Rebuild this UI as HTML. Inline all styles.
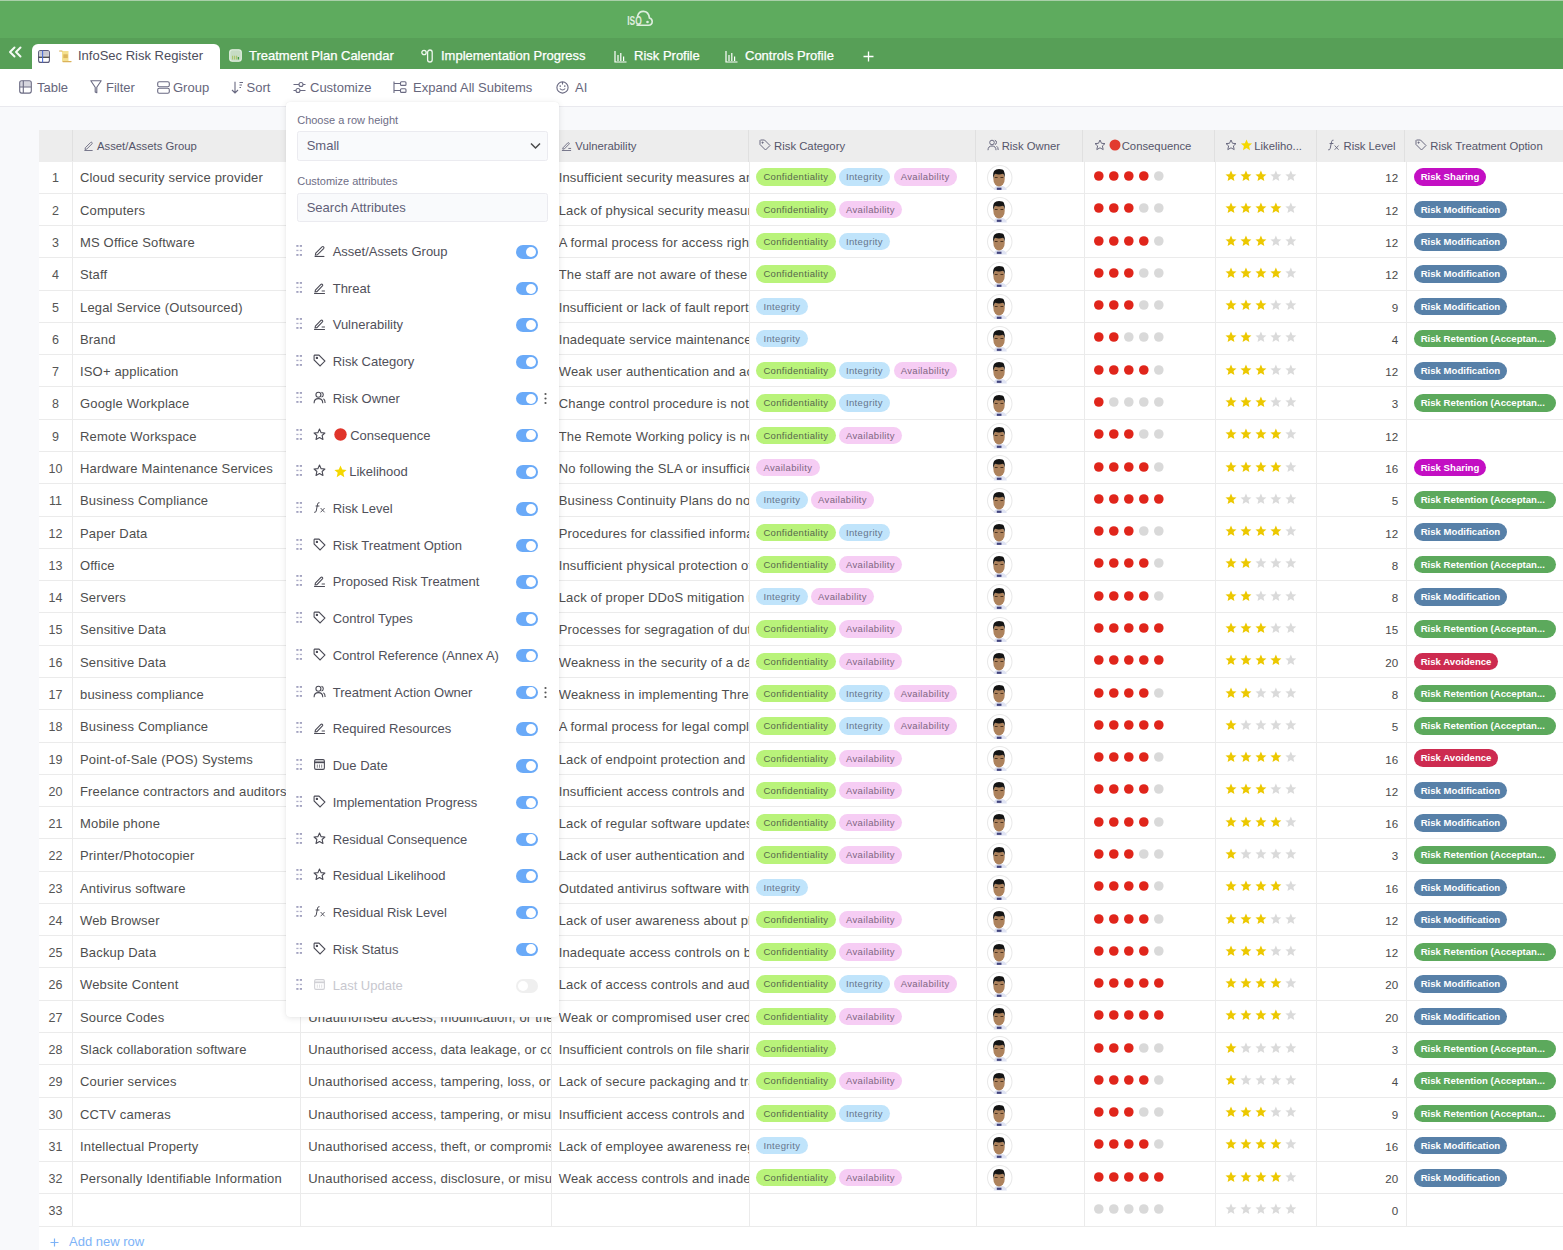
<!DOCTYPE html><html><head><meta charset="utf-8"><style>
*{box-sizing:border-box}
html,body{margin:0;padding:0}
body{width:1563px;height:1250px;overflow:hidden;background:#f8f9fb;font-family:"Liberation Sans",sans-serif;position:relative;color:#333}
.abs{position:absolute}
#top{position:absolute;left:0;top:0;width:1563px;height:38px;background:#5eab5e;border-top:1px solid #a9cfa9}
#tabs{position:absolute;left:0;top:38px;width:1563px;height:31px;background:#579f57}
.tab{position:absolute;top:1.5px;height:31px;line-height:31px;font-size:13px;color:#fff;white-space:nowrap;-webkit-text-stroke:0.25px #fff}
.tab svg{position:absolute;top:10px}
#atab{position:absolute;left:32px;top:5.5px;width:188px;height:25.5px;background:#fff;border-radius:6px 6px 0 0}
#tool{position:absolute;left:0;top:69px;width:1563px;height:38px;background:#fff;border-bottom:1px solid #e9e9ee}
.ti{position:absolute;top:1.2px;height:37px;line-height:36px;font-size:13px;color:#66667c;white-space:nowrap}
.ti svg{position:absolute;top:10.5px}
#table{position:absolute;left:39px;top:129.6px;width:1524px;height:1120.4px;background:#fff}
#thead{position:absolute;left:0;top:0;width:1524px;height:32px;background:#ededed}
.hc{position:absolute;top:0;height:32px;border-right:1px solid #e0e0e0;font-size:11.3px;color:#55556a;line-height:33.5px;white-space:nowrap;overflow:hidden;padding-left:11.3px}
.hi{display:inline-block;vertical-align:middle;margin-right:3px;position:relative;top:-1.5px;color:#6a6a80}
.hi svg{display:block}
.ht{vertical-align:middle}
.row{position:absolute;left:0;width:1524px;height:32.28px;border-bottom:1px solid #ebebeb}
.c{position:absolute;top:0;height:32.28px;border-right:1px solid #ebebeb;font-size:13px;letter-spacing:0.17px;line-height:33px;white-space:nowrap;overflow:hidden;color:#4e4e4e;padding-left:8px}
.pc{padding-left:7px}
.num{text-align:center;padding-left:0;color:#555;font-size:12.5px;letter-spacing:0;line-height:34.5px}
.rl{text-align:right;padding-right:8px;padding-left:0;color:#4a4a4a;font-size:11.6px;letter-spacing:0;line-height:33px}
.pill{display:inline-block;height:17.3px;line-height:17.5px;border-radius:9px;font-size:9.5px;letter-spacing:0.35px;padding:0 7.4px 0 7px;vertical-align:top;margin-right:3.3px;position:relative;top:7px}
.cc{background:#b9f37a;color:#57674c}
.ci{background:#c0e4fb;color:#66758c}
.ca{background:#f6cdf4;color:#7f6682}
.tp{display:inline-block;height:17.6px;line-height:17.8px;border-radius:9px;font-size:9.6px;letter-spacing:0;font-weight:bold;padding:0 6.5px;color:#fff;vertical-align:top;position:relative;top:6.9px}
.ts{background:#c30fc3}
.tm{background:#5780a8}
.tr{background:#5ca95c;padding-right:11px !important}
.tv{background:#cd2b50}
.av{position:absolute;left:11.3px;top:3.3px}
.dots{position:absolute;left:10.5px;top:9.6px}
.stars{position:absolute;left:9.5px;top:8.6px}
#pop{position:absolute;left:285.7px;top:101.5px;width:273px;height:915.5px;background:#fff;border-radius:4px;box-shadow:0 1px 6px rgba(0,0,0,0.10),0 0 1px rgba(0,0,0,0.08)}
.plab{position:absolute;left:11.5px;font-size:11px;color:#6e6e86;white-space:nowrap}
.pbox{position:absolute;left:11.5px;width:250.5px;background:#f9fafc;border:1px solid #ebebf0;border-radius:2.5px;font-size:13px;color:#5f5f78;padding-left:8.5px}
.attr{position:absolute;left:0;width:273px;height:20px;font-size:13px;color:#50505a;white-space:nowrap}
.attr .drag{position:absolute;left:10.8px;top:3px}
.attr .ai{position:absolute;left:27px;top:2px;color:#4a4a55}
.attr .ai svg{width:13px;height:13px;display:block}
.attr .at{position:absolute;left:47px;top:0;line-height:20px}
.tog{position:absolute;left:230px;top:3px;width:22px;height:13.5px;border-radius:7px;background:#6aaaf8}
.tog::after{content:"";position:absolute;right:2px;top:1.8px;width:10px;height:10px;border-radius:50%;background:#fff}
.tog.off{background:#efefef}
.tog.off::after{left:2px;right:auto}
.keb{position:absolute;left:258px;top:3px;width:3px;height:14px}
</style></head><body>
<div id="top"><svg class="abs" style="left:626px;top:7px" width="28" height="19" viewBox="0 0 28 19" opacity="0.8"><path d="M11 17.2 H22.5 Q26.2 17.2 26.2 13.6 Q26.2 10.6 23.4 10 Q22.6 3.4 17.3 3.4 Q12.8 3.4 11.6 8" fill="none" stroke="#fff" stroke-width="1.6" stroke-linecap="round"/><text x="1.2" y="17.4" font-family="Liberation Sans" font-weight="bold" font-size="12.5" fill="#fff" textLength="14.5" lengthAdjust="spacingAndGlyphs">ISO</text><circle cx="21.5" cy="14" r="1.3" fill="#fff"/></svg></div>
<div id="tabs">
<svg class="abs" style="left:8px;top:7.5px" width="15" height="12" viewBox="0 0 15 12" fill="none" stroke="#f4fbf4" stroke-width="2" stroke-linecap="round" stroke-linejoin="round"><path d="M6.5 1.5 L2 6 L6.5 10.5 M12.5 1.5 L8 6 L12.5 10.5"/></svg>
<div id="atab"></div>
<div class="tab" style="left:38px;top:5px;height:26px;line-height:26px;color:#4d4d5c;-webkit-text-stroke:0"><svg style="left:0;top:6.5px" width="12" height="13" viewBox="0 0 12 13"><rect x="0.6" y="0.6" width="10.8" height="11.8" rx="2" fill="#fff" stroke="#5a5a7a" stroke-width="1.1"/><rect x="1.2" y="1.2" width="9.6" height="4.6" fill="#c8c8d0"/><path d="M0.6 7.2 H11.4" stroke="#333" stroke-width="1.3"/><path d="M4.6 0.6 V12.4" stroke="#4b6fd6" stroke-width="1.1"/></svg><svg style="left:21px;top:6.5px" width="13" height="13" viewBox="0 0 13 13"><path d="M1 1 H9.5 V11.5 H4 Q3 11.5 3 10.5 V2 Q3 1 1 1Z" fill="#f4e08f"/><rect x="4.3" y="4.3" width="4.5" height="3.8" fill="#dcb65c"/><path d="M4 11.6 H12" stroke="#dbb25a" stroke-width="1.3" stroke-linecap="round"/><path d="M0.6 1 H3" stroke="#d8ae55" stroke-width="1.2" stroke-linecap="round"/></svg><span style="position:absolute;left:40px">InfoSec Risk Register</span></div>
<div class="tab" style="left:0"><svg style="left:229px;top:9.5px" width="13" height="13" viewBox="0 0 13 13"><rect x="0.7" y="0.7" width="11.6" height="11.6" rx="2.5" fill="#c6dcc4" stroke="#e8f2e6" stroke-width="1.1"/><path d="M3.6 10.5 V6.8 M5.6 10.5 V6.8 M7.6 10.5 V6.8" stroke="#a9c46a" stroke-width="1.1"/><path d="M9.4 10.5 V8" stroke="#3f9a3f" stroke-width="1.3"/></svg><span style="position:absolute;left:249px">Treatment Plan Calendar</span></div>
<div class="tab" style="left:0"><svg style="left:421px;top:9.5px" width="13" height="14" viewBox="0 0 13 14" fill="none" stroke="#eef7ee" stroke-width="1.3"><circle cx="3" cy="3.5" r="2.2"/><rect x="6.6" y="1" width="4.6" height="12" rx="2.3"/></svg><span style="position:absolute;left:441px">Implementation Progress</span></div>
<div class="tab" style="left:0"><svg style="left:614px" width="13" height="13" viewBox="0 0 13 13" fill="none" stroke="#fff" stroke-width="1.2"><path d="M1 1 V12 H12.5"/><path d="M4 11 V5 M6.8 11 V3 M9.6 11 V6.5"/></svg><span style="position:absolute;left:634px">Risk Profile</span></div>
<div class="tab" style="left:0"><svg style="left:725px" width="13" height="13" viewBox="0 0 13 13" fill="none" stroke="#fff" stroke-width="1.2"><path d="M1 1 V12 H12.5"/><path d="M4 11 V5 M6.8 11 V3 M9.6 11 V6.5"/></svg><span style="position:absolute;left:745px">Controls Profile</span></div>
<svg class="abs" style="left:863px;top:13px" width="11" height="11" viewBox="0 0 11 11"><path d="M5.5 0.5 V10.5 M0.5 5.5 H10.5" stroke="#fff" stroke-width="1.3"/></svg>
</div>
<div id="tool">
<div class="ti" style="left:0"><svg style="left:19px;top:10px" width="13" height="14" viewBox="0 0 13 14" fill="none" stroke="#6a6a82" stroke-width="1.1"><rect x="1.2" y="1.2" width="10.6" height="5.6" fill="#d6d6de" stroke="none"/><rect x="0.7" y="0.7" width="11.6" height="12.4" rx="2"/><path d="M0.7 7 H12.3 M4.3 0.7 V13.1"/></svg><span style="position:absolute;left:37px">Table</span></div>
<div class="ti" style="left:0"><svg style="left:89.5px;top:10px" width="12" height="14" viewBox="0 0 12 14" fill="none" stroke="#6a6a82" stroke-width="1.1" stroke-linejoin="round"><path d="M0.8 0.8 H11.2 L6.8 7.2 V12.8 L5.2 12 V7.2Z"/></svg><span style="position:absolute;left:106px">Filter</span></div>
<div class="ti" style="left:0"><svg style="left:157px" width="13" height="13" viewBox="0 0 13 13" fill="none" stroke="#6a6a82" stroke-width="1.1"><rect x="0.7" y="0.7" width="11.6" height="5" rx="1.5"/><rect x="0.7" y="7.3" width="11.6" height="5" rx="1.5"/></svg><span style="position:absolute;left:173px">Group</span></div>
<div class="ti" style="left:0"><svg style="left:230.5px" width="13" height="13" viewBox="0 0 13 13" fill="none" stroke="#6a6a82" stroke-width="1.1"><path d="M4 0.8 V12 M1 9 L4 12 L7 9 M8.5 1.5 H12 M8.5 4 H11 M8.5 6.5 H10"/></svg><span style="position:absolute;left:246.6px">Sort</span></div>
<div class="ti" style="left:0"><svg style="left:293px" width="13" height="13" viewBox="0 0 13 13" fill="none" stroke="#6a6a82" stroke-width="1.1"><path d="M0.5 3.5 H12.5 M0.5 9.5 H12.5"/><circle cx="8" cy="3.5" r="2" fill="#fff"/><circle cx="5" cy="9.5" r="2" fill="#fff"/></svg><span style="position:absolute;left:310px">Customize</span></div>
<div class="ti" style="left:0"><svg style="left:393px" width="14" height="13" viewBox="0 0 14 13" fill="none" stroke="#6a6a82" stroke-width="1.1"><path d="M1 0.5 V12 M1 2.5 H7 M1 9.5 H7"/><rect x="7.5" y="0.8" width="5.5" height="3.6" rx="1"/><rect x="7.5" y="7.8" width="5.5" height="3.6" rx="1"/></svg><span style="position:absolute;left:413px">Expand All Subitems</span></div>
<div class="ti" style="left:0"><svg style="left:556px" width="13" height="13" viewBox="0 0 13 13" fill="none" stroke="#6a6a82" stroke-width="1.1"><circle cx="6.5" cy="6.5" r="5.6"/><path d="M3.8 7.5 Q6.5 10.5 9.2 7.5 M4.2 4.2 V6 M8.8 4.2 V6 M6.5 1 V3.5"/></svg><span style="position:absolute;left:575px">AI</span></div>
</div>
<div id="table"><div id="thead">
<div class="hc" style="left:0;width:33.70px"></div>
<div class="hc" style="left:32.70px;width:228.80px"><span class="hi"><svg width="11" height="11" viewBox="0 0 12 12" fill="none" stroke="currentColor" stroke-width="1"><path d="M2.5 8.5 L8.3 2.7 Q9.1 2 9.8 2.7 Q10.5 3.4 9.8 4.2 L4 10 L2.2 10.3Z"/><path d="M1.5 11.5 H10.5"/></svg></span><span class="ht">Asset/Assets Group</span></div>
<div class="hc" style="left:260.50px;width:251.50px"><span class="hi"><svg width="11" height="11" viewBox="0 0 12 12" fill="none" stroke="currentColor" stroke-width="1"><path d="M2.2 8.5 L7.3 3.2 Q8 2.5 8.7 3.2 Q9.4 3.9 8.7 4.6 L3.6 9.8 L1.9 10Z"/><path d="M1 11.5 H11 M8 9.2 H11"/></svg></span><span class="ht">Threat</span></div>
<div class="hc" style="left:511.00px;width:198.80px"><span class="hi"><svg width="11" height="11" viewBox="0 0 12 12" fill="none" stroke="currentColor" stroke-width="1"><path d="M2.2 8.5 L7.3 3.2 Q8 2.5 8.7 3.2 Q9.4 3.9 8.7 4.6 L3.6 9.8 L1.9 10Z"/><path d="M1 11.5 H11 M8 9.2 H11"/></svg></span><span class="ht">Vulnerability</span></div>
<div class="hc" style="left:708.80px;width:228.60px"><span class="hi"><svg width="12" height="12" viewBox="0 0 12 12" fill="none" stroke="currentColor" stroke-width="1"><path d="M1 1.5 V5.5 L6.5 11 L11 6.5 L5.5 1 H1.5Z"/><circle cx="3.6" cy="3.6" r="0.6" fill="currentColor"/></svg></span><span class="ht">Risk Category</span></div>
<div class="hc" style="left:936.40px;width:108.00px"><span class="hi"><svg width="12" height="12" viewBox="0 0 12 12" fill="none" stroke="currentColor" stroke-width="1"><circle cx="5" cy="3.5" r="2.3"/><path d="M1 11.2 Q1 7 5 7 Q9 7 9 11.2"/><path d="M7.8 1.3 Q9.6 1.6 9.5 3.5 Q9.4 5.3 7.8 5.6 M9.6 7.2 Q11.2 8 11.2 11"/></svg></span><span class="ht">Risk Owner</span></div>
<div class="hc" style="left:1043.40px;width:132.50px"><span class="hi"><svg width="12" height="12" viewBox="0 0 12 12" fill="none" stroke="currentColor" stroke-width="1"><path d="M6 1 L7.5 4.3 L11 4.6 L8.4 6.9 L9.2 10.6 L6 8.8 L2.8 10.6 L3.6 6.9 L1 4.6 L4.5 4.3Z" stroke-linejoin="round"/></svg></span><span class="hi" style="margin-right:1px"><svg width="12" height="12" viewBox="0 0 12 12"><circle cx="6" cy="6" r="5.5" fill="#e23a2e"/></svg></span><span class="ht">Consequence</span></div>
<div class="hc" style="left:1174.90px;width:103.30px"><span class="hi"><svg width="12" height="12" viewBox="0 0 12 12" fill="none" stroke="currentColor" stroke-width="1"><path d="M6 1 L7.5 4.3 L11 4.6 L8.4 6.9 L9.2 10.6 L6 8.8 L2.8 10.6 L3.6 6.9 L1 4.6 L4.5 4.3Z" stroke-linejoin="round"/></svg></span><span class="hi" style="margin-right:1px"><svg width="13" height="12" viewBox="0 0 12 12"><path d="M6 0.5 L7.6 4.2 L11.6 4.5 L8.6 7.1 L9.5 11.2 L6 9.1 L2.5 11.2 L3.4 7.1 L0.4 4.5 L4.4 4.2Z" fill="#f5d800"/></svg></span><span class="ht">Likeliho...</span></div>
<div class="hc" style="left:1277.20px;width:88.80px"><span class="hi"><svg width="13" height="12" viewBox="0 0 13 12" fill="none" stroke="currentColor" stroke-width="1"><path d="M6.5 1.2 Q5 0.8 4.6 2.6 L3.2 9.5 Q2.8 11.2 1.2 10.8 M2.6 4.5 H6.4"/><path d="M7.6 6.5 L11.6 10.8 M11.6 6.5 L7.6 10.8" stroke-width="0.9"/></svg></span><span class="ht">Risk Level</span></div>
<div class="hc" style="left:1365.00px;width:160.00px"><span class="hi"><svg width="12" height="12" viewBox="0 0 12 12" fill="none" stroke="currentColor" stroke-width="1"><path d="M1 1.5 V5.5 L6.5 11 L11 6.5 L5.5 1 H1.5Z"/><circle cx="3.6" cy="3.6" r="0.6" fill="currentColor"/></svg></span><span class="ht">Risk Treatment Option</span></div>
</div>
<div class="row" style="top:31.90px">
<div class="c num" style="left:0.00px;width:34.00px">1</div>
<div class="c " style="left:33.00px;width:229.30px">Cloud security service provider</div>
<div class="c " style="left:261.30px;width:251.40px"></div>
<div class="c " style="left:511.70px;width:199.70px">Insufficient security measures and</div>
<div class="c pc" style="left:710.40px;width:227.70px"><span class="pill cc">Confidentiality</span><span class="pill ci">Integrity</span><span class="pill ca">Availability</span></div>
<div class="c " style="left:937.10px;width:108.50px"><svg class="av" width="25.5" height="25.5" viewBox="0 0 25 25"><circle cx="12.5" cy="12.5" r="12" fill="#fff" stroke="#e9e9e9" stroke-width="1"/><path d="M6.5 25 Q7 21.2 10 20.6 L15 20.6 Q18.6 21.2 19.5 25Z" fill="#dfe3f3"/><path d="M9.6 22.2 H14.2 V24.4 H9.6Z" fill="#41447e"/><ellipse cx="11.8" cy="13.6" rx="5.6" ry="7.6" fill="#ad825c"/><path d="M6.1 13 Q5.6 7.5 7.2 5.6 Q8.5 3.9 11.8 3.9 Q15.6 3.9 16.6 5.8 Q17.8 8 17.4 12.6 Q16.8 9.2 15.6 8.6 Q12 9.8 8 8.7 Q6.8 10 6.1 13Z" fill="#141414"/><path d="M7.6 12.2 H10.4 M13.2 12.2 H16" stroke="#4d3522" stroke-width="1.1"/></svg></div>
<div class="c " style="left:1044.60px;width:132.80px"><svg class="dots" width="72" height="10" viewBox="0 0 72 10"><circle cx="4.8" cy="5" r="4.8" fill="#e0251b"/><circle cx="19.8" cy="5" r="4.8" fill="#e0251b"/><circle cx="34.8" cy="5" r="4.8" fill="#e0251b"/><circle cx="49.8" cy="5" r="4.8" fill="#e0251b"/><circle cx="64.8" cy="5" r="4.8" fill="#d9d9d9"/></svg></div>
<div class="c " style="left:1176.40px;width:101.80px"><svg class="stars" width="72" height="12" viewBox="0 0 72 12"><path transform="translate(0.00,0)" d="M6 0.6 L7.6 4.2 L11.5 4.5 L8.5 7.1 L9.4 10.9 L6 8.9 L2.6 10.9 L3.5 7.1 L0.5 4.5 L4.4 4.2Z" fill="#ecc800"/><path transform="translate(14.96,0)" d="M6 0.6 L7.6 4.2 L11.5 4.5 L8.5 7.1 L9.4 10.9 L6 8.9 L2.6 10.9 L3.5 7.1 L0.5 4.5 L4.4 4.2Z" fill="#ecc800"/><path transform="translate(29.92,0)" d="M6 0.6 L7.6 4.2 L11.5 4.5 L8.5 7.1 L9.4 10.9 L6 8.9 L2.6 10.9 L3.5 7.1 L0.5 4.5 L4.4 4.2Z" fill="#ecc800"/><path transform="translate(44.88,0)" d="M6 0.6 L7.6 4.2 L11.5 4.5 L8.5 7.1 L9.4 10.9 L6 8.9 L2.6 10.9 L3.5 7.1 L0.5 4.5 L4.4 4.2Z" fill="#dadada"/><path transform="translate(59.84,0)" d="M6 0.6 L7.6 4.2 L11.5 4.5 L8.5 7.1 L9.4 10.9 L6 8.9 L2.6 10.9 L3.5 7.1 L0.5 4.5 L4.4 4.2Z" fill="#dadada"/></svg></div>
<div class="c rl" style="left:1277.20px;width:91.00px">12</div>
<div class="c " style="left:1367.20px;width:157.80px"><span class="tp ts">Risk Sharing</span></div>
</div>
<div class="row" style="top:64.18px">
<div class="c num" style="left:0.00px;width:34.00px">2</div>
<div class="c " style="left:33.00px;width:229.30px">Computers</div>
<div class="c " style="left:261.30px;width:251.40px"></div>
<div class="c " style="left:511.70px;width:199.70px">Lack of physical security measures</div>
<div class="c pc" style="left:710.40px;width:227.70px"><span class="pill cc">Confidentiality</span><span class="pill ca">Availability</span></div>
<div class="c " style="left:937.10px;width:108.50px"><svg class="av" width="25.5" height="25.5" viewBox="0 0 25 25"><circle cx="12.5" cy="12.5" r="12" fill="#fff" stroke="#e9e9e9" stroke-width="1"/><path d="M6.5 25 Q7 21.2 10 20.6 L15 20.6 Q18.6 21.2 19.5 25Z" fill="#dfe3f3"/><path d="M9.6 22.2 H14.2 V24.4 H9.6Z" fill="#41447e"/><ellipse cx="11.8" cy="13.6" rx="5.6" ry="7.6" fill="#ad825c"/><path d="M6.1 13 Q5.6 7.5 7.2 5.6 Q8.5 3.9 11.8 3.9 Q15.6 3.9 16.6 5.8 Q17.8 8 17.4 12.6 Q16.8 9.2 15.6 8.6 Q12 9.8 8 8.7 Q6.8 10 6.1 13Z" fill="#141414"/><path d="M7.6 12.2 H10.4 M13.2 12.2 H16" stroke="#4d3522" stroke-width="1.1"/></svg></div>
<div class="c " style="left:1044.60px;width:132.80px"><svg class="dots" width="72" height="10" viewBox="0 0 72 10"><circle cx="4.8" cy="5" r="4.8" fill="#e0251b"/><circle cx="19.8" cy="5" r="4.8" fill="#e0251b"/><circle cx="34.8" cy="5" r="4.8" fill="#e0251b"/><circle cx="49.8" cy="5" r="4.8" fill="#d9d9d9"/><circle cx="64.8" cy="5" r="4.8" fill="#d9d9d9"/></svg></div>
<div class="c " style="left:1176.40px;width:101.80px"><svg class="stars" width="72" height="12" viewBox="0 0 72 12"><path transform="translate(0.00,0)" d="M6 0.6 L7.6 4.2 L11.5 4.5 L8.5 7.1 L9.4 10.9 L6 8.9 L2.6 10.9 L3.5 7.1 L0.5 4.5 L4.4 4.2Z" fill="#ecc800"/><path transform="translate(14.96,0)" d="M6 0.6 L7.6 4.2 L11.5 4.5 L8.5 7.1 L9.4 10.9 L6 8.9 L2.6 10.9 L3.5 7.1 L0.5 4.5 L4.4 4.2Z" fill="#ecc800"/><path transform="translate(29.92,0)" d="M6 0.6 L7.6 4.2 L11.5 4.5 L8.5 7.1 L9.4 10.9 L6 8.9 L2.6 10.9 L3.5 7.1 L0.5 4.5 L4.4 4.2Z" fill="#ecc800"/><path transform="translate(44.88,0)" d="M6 0.6 L7.6 4.2 L11.5 4.5 L8.5 7.1 L9.4 10.9 L6 8.9 L2.6 10.9 L3.5 7.1 L0.5 4.5 L4.4 4.2Z" fill="#ecc800"/><path transform="translate(59.84,0)" d="M6 0.6 L7.6 4.2 L11.5 4.5 L8.5 7.1 L9.4 10.9 L6 8.9 L2.6 10.9 L3.5 7.1 L0.5 4.5 L4.4 4.2Z" fill="#dadada"/></svg></div>
<div class="c rl" style="left:1277.20px;width:91.00px">12</div>
<div class="c " style="left:1367.20px;width:157.80px"><span class="tp tm">Risk Modification</span></div>
</div>
<div class="row" style="top:96.46px">
<div class="c num" style="left:0.00px;width:34.00px">3</div>
<div class="c " style="left:33.00px;width:229.30px">MS Office Software</div>
<div class="c " style="left:261.30px;width:251.40px"></div>
<div class="c " style="left:511.70px;width:199.70px">A formal process for access rights</div>
<div class="c pc" style="left:710.40px;width:227.70px"><span class="pill cc">Confidentiality</span><span class="pill ci">Integrity</span></div>
<div class="c " style="left:937.10px;width:108.50px"><svg class="av" width="25.5" height="25.5" viewBox="0 0 25 25"><circle cx="12.5" cy="12.5" r="12" fill="#fff" stroke="#e9e9e9" stroke-width="1"/><path d="M6.5 25 Q7 21.2 10 20.6 L15 20.6 Q18.6 21.2 19.5 25Z" fill="#dfe3f3"/><path d="M9.6 22.2 H14.2 V24.4 H9.6Z" fill="#41447e"/><ellipse cx="11.8" cy="13.6" rx="5.6" ry="7.6" fill="#ad825c"/><path d="M6.1 13 Q5.6 7.5 7.2 5.6 Q8.5 3.9 11.8 3.9 Q15.6 3.9 16.6 5.8 Q17.8 8 17.4 12.6 Q16.8 9.2 15.6 8.6 Q12 9.8 8 8.7 Q6.8 10 6.1 13Z" fill="#141414"/><path d="M7.6 12.2 H10.4 M13.2 12.2 H16" stroke="#4d3522" stroke-width="1.1"/></svg></div>
<div class="c " style="left:1044.60px;width:132.80px"><svg class="dots" width="72" height="10" viewBox="0 0 72 10"><circle cx="4.8" cy="5" r="4.8" fill="#e0251b"/><circle cx="19.8" cy="5" r="4.8" fill="#e0251b"/><circle cx="34.8" cy="5" r="4.8" fill="#e0251b"/><circle cx="49.8" cy="5" r="4.8" fill="#e0251b"/><circle cx="64.8" cy="5" r="4.8" fill="#d9d9d9"/></svg></div>
<div class="c " style="left:1176.40px;width:101.80px"><svg class="stars" width="72" height="12" viewBox="0 0 72 12"><path transform="translate(0.00,0)" d="M6 0.6 L7.6 4.2 L11.5 4.5 L8.5 7.1 L9.4 10.9 L6 8.9 L2.6 10.9 L3.5 7.1 L0.5 4.5 L4.4 4.2Z" fill="#ecc800"/><path transform="translate(14.96,0)" d="M6 0.6 L7.6 4.2 L11.5 4.5 L8.5 7.1 L9.4 10.9 L6 8.9 L2.6 10.9 L3.5 7.1 L0.5 4.5 L4.4 4.2Z" fill="#ecc800"/><path transform="translate(29.92,0)" d="M6 0.6 L7.6 4.2 L11.5 4.5 L8.5 7.1 L9.4 10.9 L6 8.9 L2.6 10.9 L3.5 7.1 L0.5 4.5 L4.4 4.2Z" fill="#ecc800"/><path transform="translate(44.88,0)" d="M6 0.6 L7.6 4.2 L11.5 4.5 L8.5 7.1 L9.4 10.9 L6 8.9 L2.6 10.9 L3.5 7.1 L0.5 4.5 L4.4 4.2Z" fill="#dadada"/><path transform="translate(59.84,0)" d="M6 0.6 L7.6 4.2 L11.5 4.5 L8.5 7.1 L9.4 10.9 L6 8.9 L2.6 10.9 L3.5 7.1 L0.5 4.5 L4.4 4.2Z" fill="#dadada"/></svg></div>
<div class="c rl" style="left:1277.20px;width:91.00px">12</div>
<div class="c " style="left:1367.20px;width:157.80px"><span class="tp tm">Risk Modification</span></div>
</div>
<div class="row" style="top:128.74px">
<div class="c num" style="left:0.00px;width:34.00px">4</div>
<div class="c " style="left:33.00px;width:229.30px">Staff</div>
<div class="c " style="left:261.30px;width:251.40px"></div>
<div class="c " style="left:511.70px;width:199.70px">The staff are not aware of these</div>
<div class="c pc" style="left:710.40px;width:227.70px"><span class="pill cc">Confidentiality</span></div>
<div class="c " style="left:937.10px;width:108.50px"><svg class="av" width="25.5" height="25.5" viewBox="0 0 25 25"><circle cx="12.5" cy="12.5" r="12" fill="#fff" stroke="#e9e9e9" stroke-width="1"/><path d="M6.5 25 Q7 21.2 10 20.6 L15 20.6 Q18.6 21.2 19.5 25Z" fill="#dfe3f3"/><path d="M9.6 22.2 H14.2 V24.4 H9.6Z" fill="#41447e"/><ellipse cx="11.8" cy="13.6" rx="5.6" ry="7.6" fill="#ad825c"/><path d="M6.1 13 Q5.6 7.5 7.2 5.6 Q8.5 3.9 11.8 3.9 Q15.6 3.9 16.6 5.8 Q17.8 8 17.4 12.6 Q16.8 9.2 15.6 8.6 Q12 9.8 8 8.7 Q6.8 10 6.1 13Z" fill="#141414"/><path d="M7.6 12.2 H10.4 M13.2 12.2 H16" stroke="#4d3522" stroke-width="1.1"/></svg></div>
<div class="c " style="left:1044.60px;width:132.80px"><svg class="dots" width="72" height="10" viewBox="0 0 72 10"><circle cx="4.8" cy="5" r="4.8" fill="#e0251b"/><circle cx="19.8" cy="5" r="4.8" fill="#e0251b"/><circle cx="34.8" cy="5" r="4.8" fill="#e0251b"/><circle cx="49.8" cy="5" r="4.8" fill="#d9d9d9"/><circle cx="64.8" cy="5" r="4.8" fill="#d9d9d9"/></svg></div>
<div class="c " style="left:1176.40px;width:101.80px"><svg class="stars" width="72" height="12" viewBox="0 0 72 12"><path transform="translate(0.00,0)" d="M6 0.6 L7.6 4.2 L11.5 4.5 L8.5 7.1 L9.4 10.9 L6 8.9 L2.6 10.9 L3.5 7.1 L0.5 4.5 L4.4 4.2Z" fill="#ecc800"/><path transform="translate(14.96,0)" d="M6 0.6 L7.6 4.2 L11.5 4.5 L8.5 7.1 L9.4 10.9 L6 8.9 L2.6 10.9 L3.5 7.1 L0.5 4.5 L4.4 4.2Z" fill="#ecc800"/><path transform="translate(29.92,0)" d="M6 0.6 L7.6 4.2 L11.5 4.5 L8.5 7.1 L9.4 10.9 L6 8.9 L2.6 10.9 L3.5 7.1 L0.5 4.5 L4.4 4.2Z" fill="#ecc800"/><path transform="translate(44.88,0)" d="M6 0.6 L7.6 4.2 L11.5 4.5 L8.5 7.1 L9.4 10.9 L6 8.9 L2.6 10.9 L3.5 7.1 L0.5 4.5 L4.4 4.2Z" fill="#ecc800"/><path transform="translate(59.84,0)" d="M6 0.6 L7.6 4.2 L11.5 4.5 L8.5 7.1 L9.4 10.9 L6 8.9 L2.6 10.9 L3.5 7.1 L0.5 4.5 L4.4 4.2Z" fill="#dadada"/></svg></div>
<div class="c rl" style="left:1277.20px;width:91.00px">12</div>
<div class="c " style="left:1367.20px;width:157.80px"><span class="tp tm">Risk Modification</span></div>
</div>
<div class="row" style="top:161.02px">
<div class="c num" style="left:0.00px;width:34.00px">5</div>
<div class="c " style="left:33.00px;width:229.30px">Legal Service (Outsourced)</div>
<div class="c " style="left:261.30px;width:251.40px"></div>
<div class="c " style="left:511.70px;width:199.70px">Insufficient or lack of fault reporting</div>
<div class="c pc" style="left:710.40px;width:227.70px"><span class="pill ci">Integrity</span></div>
<div class="c " style="left:937.10px;width:108.50px"><svg class="av" width="25.5" height="25.5" viewBox="0 0 25 25"><circle cx="12.5" cy="12.5" r="12" fill="#fff" stroke="#e9e9e9" stroke-width="1"/><path d="M6.5 25 Q7 21.2 10 20.6 L15 20.6 Q18.6 21.2 19.5 25Z" fill="#dfe3f3"/><path d="M9.6 22.2 H14.2 V24.4 H9.6Z" fill="#41447e"/><ellipse cx="11.8" cy="13.6" rx="5.6" ry="7.6" fill="#ad825c"/><path d="M6.1 13 Q5.6 7.5 7.2 5.6 Q8.5 3.9 11.8 3.9 Q15.6 3.9 16.6 5.8 Q17.8 8 17.4 12.6 Q16.8 9.2 15.6 8.6 Q12 9.8 8 8.7 Q6.8 10 6.1 13Z" fill="#141414"/><path d="M7.6 12.2 H10.4 M13.2 12.2 H16" stroke="#4d3522" stroke-width="1.1"/></svg></div>
<div class="c " style="left:1044.60px;width:132.80px"><svg class="dots" width="72" height="10" viewBox="0 0 72 10"><circle cx="4.8" cy="5" r="4.8" fill="#e0251b"/><circle cx="19.8" cy="5" r="4.8" fill="#e0251b"/><circle cx="34.8" cy="5" r="4.8" fill="#e0251b"/><circle cx="49.8" cy="5" r="4.8" fill="#d9d9d9"/><circle cx="64.8" cy="5" r="4.8" fill="#d9d9d9"/></svg></div>
<div class="c " style="left:1176.40px;width:101.80px"><svg class="stars" width="72" height="12" viewBox="0 0 72 12"><path transform="translate(0.00,0)" d="M6 0.6 L7.6 4.2 L11.5 4.5 L8.5 7.1 L9.4 10.9 L6 8.9 L2.6 10.9 L3.5 7.1 L0.5 4.5 L4.4 4.2Z" fill="#ecc800"/><path transform="translate(14.96,0)" d="M6 0.6 L7.6 4.2 L11.5 4.5 L8.5 7.1 L9.4 10.9 L6 8.9 L2.6 10.9 L3.5 7.1 L0.5 4.5 L4.4 4.2Z" fill="#ecc800"/><path transform="translate(29.92,0)" d="M6 0.6 L7.6 4.2 L11.5 4.5 L8.5 7.1 L9.4 10.9 L6 8.9 L2.6 10.9 L3.5 7.1 L0.5 4.5 L4.4 4.2Z" fill="#ecc800"/><path transform="translate(44.88,0)" d="M6 0.6 L7.6 4.2 L11.5 4.5 L8.5 7.1 L9.4 10.9 L6 8.9 L2.6 10.9 L3.5 7.1 L0.5 4.5 L4.4 4.2Z" fill="#dadada"/><path transform="translate(59.84,0)" d="M6 0.6 L7.6 4.2 L11.5 4.5 L8.5 7.1 L9.4 10.9 L6 8.9 L2.6 10.9 L3.5 7.1 L0.5 4.5 L4.4 4.2Z" fill="#dadada"/></svg></div>
<div class="c rl" style="left:1277.20px;width:91.00px">9</div>
<div class="c " style="left:1367.20px;width:157.80px"><span class="tp tm">Risk Modification</span></div>
</div>
<div class="row" style="top:193.30px">
<div class="c num" style="left:0.00px;width:34.00px">6</div>
<div class="c " style="left:33.00px;width:229.30px">Brand</div>
<div class="c " style="left:261.30px;width:251.40px"></div>
<div class="c " style="left:511.70px;width:199.70px">Inadequate service maintenance</div>
<div class="c pc" style="left:710.40px;width:227.70px"><span class="pill ci">Integrity</span></div>
<div class="c " style="left:937.10px;width:108.50px"><svg class="av" width="25.5" height="25.5" viewBox="0 0 25 25"><circle cx="12.5" cy="12.5" r="12" fill="#fff" stroke="#e9e9e9" stroke-width="1"/><path d="M6.5 25 Q7 21.2 10 20.6 L15 20.6 Q18.6 21.2 19.5 25Z" fill="#dfe3f3"/><path d="M9.6 22.2 H14.2 V24.4 H9.6Z" fill="#41447e"/><ellipse cx="11.8" cy="13.6" rx="5.6" ry="7.6" fill="#ad825c"/><path d="M6.1 13 Q5.6 7.5 7.2 5.6 Q8.5 3.9 11.8 3.9 Q15.6 3.9 16.6 5.8 Q17.8 8 17.4 12.6 Q16.8 9.2 15.6 8.6 Q12 9.8 8 8.7 Q6.8 10 6.1 13Z" fill="#141414"/><path d="M7.6 12.2 H10.4 M13.2 12.2 H16" stroke="#4d3522" stroke-width="1.1"/></svg></div>
<div class="c " style="left:1044.60px;width:132.80px"><svg class="dots" width="72" height="10" viewBox="0 0 72 10"><circle cx="4.8" cy="5" r="4.8" fill="#e0251b"/><circle cx="19.8" cy="5" r="4.8" fill="#e0251b"/><circle cx="34.8" cy="5" r="4.8" fill="#d9d9d9"/><circle cx="49.8" cy="5" r="4.8" fill="#d9d9d9"/><circle cx="64.8" cy="5" r="4.8" fill="#d9d9d9"/></svg></div>
<div class="c " style="left:1176.40px;width:101.80px"><svg class="stars" width="72" height="12" viewBox="0 0 72 12"><path transform="translate(0.00,0)" d="M6 0.6 L7.6 4.2 L11.5 4.5 L8.5 7.1 L9.4 10.9 L6 8.9 L2.6 10.9 L3.5 7.1 L0.5 4.5 L4.4 4.2Z" fill="#ecc800"/><path transform="translate(14.96,0)" d="M6 0.6 L7.6 4.2 L11.5 4.5 L8.5 7.1 L9.4 10.9 L6 8.9 L2.6 10.9 L3.5 7.1 L0.5 4.5 L4.4 4.2Z" fill="#ecc800"/><path transform="translate(29.92,0)" d="M6 0.6 L7.6 4.2 L11.5 4.5 L8.5 7.1 L9.4 10.9 L6 8.9 L2.6 10.9 L3.5 7.1 L0.5 4.5 L4.4 4.2Z" fill="#dadada"/><path transform="translate(44.88,0)" d="M6 0.6 L7.6 4.2 L11.5 4.5 L8.5 7.1 L9.4 10.9 L6 8.9 L2.6 10.9 L3.5 7.1 L0.5 4.5 L4.4 4.2Z" fill="#dadada"/><path transform="translate(59.84,0)" d="M6 0.6 L7.6 4.2 L11.5 4.5 L8.5 7.1 L9.4 10.9 L6 8.9 L2.6 10.9 L3.5 7.1 L0.5 4.5 L4.4 4.2Z" fill="#dadada"/></svg></div>
<div class="c rl" style="left:1277.20px;width:91.00px">4</div>
<div class="c " style="left:1367.20px;width:157.80px"><span class="tp tr">Risk Retention (Acceptan...</span></div>
</div>
<div class="row" style="top:225.58px">
<div class="c num" style="left:0.00px;width:34.00px">7</div>
<div class="c " style="left:33.00px;width:229.30px">ISO+ application</div>
<div class="c " style="left:261.30px;width:251.40px"></div>
<div class="c " style="left:511.70px;width:199.70px">Weak user authentication and access</div>
<div class="c pc" style="left:710.40px;width:227.70px"><span class="pill cc">Confidentiality</span><span class="pill ci">Integrity</span><span class="pill ca">Availability</span></div>
<div class="c " style="left:937.10px;width:108.50px"><svg class="av" width="25.5" height="25.5" viewBox="0 0 25 25"><circle cx="12.5" cy="12.5" r="12" fill="#fff" stroke="#e9e9e9" stroke-width="1"/><path d="M6.5 25 Q7 21.2 10 20.6 L15 20.6 Q18.6 21.2 19.5 25Z" fill="#dfe3f3"/><path d="M9.6 22.2 H14.2 V24.4 H9.6Z" fill="#41447e"/><ellipse cx="11.8" cy="13.6" rx="5.6" ry="7.6" fill="#ad825c"/><path d="M6.1 13 Q5.6 7.5 7.2 5.6 Q8.5 3.9 11.8 3.9 Q15.6 3.9 16.6 5.8 Q17.8 8 17.4 12.6 Q16.8 9.2 15.6 8.6 Q12 9.8 8 8.7 Q6.8 10 6.1 13Z" fill="#141414"/><path d="M7.6 12.2 H10.4 M13.2 12.2 H16" stroke="#4d3522" stroke-width="1.1"/></svg></div>
<div class="c " style="left:1044.60px;width:132.80px"><svg class="dots" width="72" height="10" viewBox="0 0 72 10"><circle cx="4.8" cy="5" r="4.8" fill="#e0251b"/><circle cx="19.8" cy="5" r="4.8" fill="#e0251b"/><circle cx="34.8" cy="5" r="4.8" fill="#e0251b"/><circle cx="49.8" cy="5" r="4.8" fill="#e0251b"/><circle cx="64.8" cy="5" r="4.8" fill="#d9d9d9"/></svg></div>
<div class="c " style="left:1176.40px;width:101.80px"><svg class="stars" width="72" height="12" viewBox="0 0 72 12"><path transform="translate(0.00,0)" d="M6 0.6 L7.6 4.2 L11.5 4.5 L8.5 7.1 L9.4 10.9 L6 8.9 L2.6 10.9 L3.5 7.1 L0.5 4.5 L4.4 4.2Z" fill="#ecc800"/><path transform="translate(14.96,0)" d="M6 0.6 L7.6 4.2 L11.5 4.5 L8.5 7.1 L9.4 10.9 L6 8.9 L2.6 10.9 L3.5 7.1 L0.5 4.5 L4.4 4.2Z" fill="#ecc800"/><path transform="translate(29.92,0)" d="M6 0.6 L7.6 4.2 L11.5 4.5 L8.5 7.1 L9.4 10.9 L6 8.9 L2.6 10.9 L3.5 7.1 L0.5 4.5 L4.4 4.2Z" fill="#ecc800"/><path transform="translate(44.88,0)" d="M6 0.6 L7.6 4.2 L11.5 4.5 L8.5 7.1 L9.4 10.9 L6 8.9 L2.6 10.9 L3.5 7.1 L0.5 4.5 L4.4 4.2Z" fill="#dadada"/><path transform="translate(59.84,0)" d="M6 0.6 L7.6 4.2 L11.5 4.5 L8.5 7.1 L9.4 10.9 L6 8.9 L2.6 10.9 L3.5 7.1 L0.5 4.5 L4.4 4.2Z" fill="#dadada"/></svg></div>
<div class="c rl" style="left:1277.20px;width:91.00px">12</div>
<div class="c " style="left:1367.20px;width:157.80px"><span class="tp tm">Risk Modification</span></div>
</div>
<div class="row" style="top:257.86px">
<div class="c num" style="left:0.00px;width:34.00px">8</div>
<div class="c " style="left:33.00px;width:229.30px">Google Workplace</div>
<div class="c " style="left:261.30px;width:251.40px"></div>
<div class="c " style="left:511.70px;width:199.70px">Change control procedure is not</div>
<div class="c pc" style="left:710.40px;width:227.70px"><span class="pill cc">Confidentiality</span><span class="pill ci">Integrity</span></div>
<div class="c " style="left:937.10px;width:108.50px"><svg class="av" width="25.5" height="25.5" viewBox="0 0 25 25"><circle cx="12.5" cy="12.5" r="12" fill="#fff" stroke="#e9e9e9" stroke-width="1"/><path d="M6.5 25 Q7 21.2 10 20.6 L15 20.6 Q18.6 21.2 19.5 25Z" fill="#dfe3f3"/><path d="M9.6 22.2 H14.2 V24.4 H9.6Z" fill="#41447e"/><ellipse cx="11.8" cy="13.6" rx="5.6" ry="7.6" fill="#ad825c"/><path d="M6.1 13 Q5.6 7.5 7.2 5.6 Q8.5 3.9 11.8 3.9 Q15.6 3.9 16.6 5.8 Q17.8 8 17.4 12.6 Q16.8 9.2 15.6 8.6 Q12 9.8 8 8.7 Q6.8 10 6.1 13Z" fill="#141414"/><path d="M7.6 12.2 H10.4 M13.2 12.2 H16" stroke="#4d3522" stroke-width="1.1"/></svg></div>
<div class="c " style="left:1044.60px;width:132.80px"><svg class="dots" width="72" height="10" viewBox="0 0 72 10"><circle cx="4.8" cy="5" r="4.8" fill="#e0251b"/><circle cx="19.8" cy="5" r="4.8" fill="#d9d9d9"/><circle cx="34.8" cy="5" r="4.8" fill="#d9d9d9"/><circle cx="49.8" cy="5" r="4.8" fill="#d9d9d9"/><circle cx="64.8" cy="5" r="4.8" fill="#d9d9d9"/></svg></div>
<div class="c " style="left:1176.40px;width:101.80px"><svg class="stars" width="72" height="12" viewBox="0 0 72 12"><path transform="translate(0.00,0)" d="M6 0.6 L7.6 4.2 L11.5 4.5 L8.5 7.1 L9.4 10.9 L6 8.9 L2.6 10.9 L3.5 7.1 L0.5 4.5 L4.4 4.2Z" fill="#ecc800"/><path transform="translate(14.96,0)" d="M6 0.6 L7.6 4.2 L11.5 4.5 L8.5 7.1 L9.4 10.9 L6 8.9 L2.6 10.9 L3.5 7.1 L0.5 4.5 L4.4 4.2Z" fill="#ecc800"/><path transform="translate(29.92,0)" d="M6 0.6 L7.6 4.2 L11.5 4.5 L8.5 7.1 L9.4 10.9 L6 8.9 L2.6 10.9 L3.5 7.1 L0.5 4.5 L4.4 4.2Z" fill="#ecc800"/><path transform="translate(44.88,0)" d="M6 0.6 L7.6 4.2 L11.5 4.5 L8.5 7.1 L9.4 10.9 L6 8.9 L2.6 10.9 L3.5 7.1 L0.5 4.5 L4.4 4.2Z" fill="#dadada"/><path transform="translate(59.84,0)" d="M6 0.6 L7.6 4.2 L11.5 4.5 L8.5 7.1 L9.4 10.9 L6 8.9 L2.6 10.9 L3.5 7.1 L0.5 4.5 L4.4 4.2Z" fill="#dadada"/></svg></div>
<div class="c rl" style="left:1277.20px;width:91.00px">3</div>
<div class="c " style="left:1367.20px;width:157.80px"><span class="tp tr">Risk Retention (Acceptan...</span></div>
</div>
<div class="row" style="top:290.14px">
<div class="c num" style="left:0.00px;width:34.00px">9</div>
<div class="c " style="left:33.00px;width:229.30px">Remote Workspace</div>
<div class="c " style="left:261.30px;width:251.40px"></div>
<div class="c " style="left:511.70px;width:199.70px">The Remote Working policy is not</div>
<div class="c pc" style="left:710.40px;width:227.70px"><span class="pill cc">Confidentiality</span><span class="pill ca">Availability</span></div>
<div class="c " style="left:937.10px;width:108.50px"><svg class="av" width="25.5" height="25.5" viewBox="0 0 25 25"><circle cx="12.5" cy="12.5" r="12" fill="#fff" stroke="#e9e9e9" stroke-width="1"/><path d="M6.5 25 Q7 21.2 10 20.6 L15 20.6 Q18.6 21.2 19.5 25Z" fill="#dfe3f3"/><path d="M9.6 22.2 H14.2 V24.4 H9.6Z" fill="#41447e"/><ellipse cx="11.8" cy="13.6" rx="5.6" ry="7.6" fill="#ad825c"/><path d="M6.1 13 Q5.6 7.5 7.2 5.6 Q8.5 3.9 11.8 3.9 Q15.6 3.9 16.6 5.8 Q17.8 8 17.4 12.6 Q16.8 9.2 15.6 8.6 Q12 9.8 8 8.7 Q6.8 10 6.1 13Z" fill="#141414"/><path d="M7.6 12.2 H10.4 M13.2 12.2 H16" stroke="#4d3522" stroke-width="1.1"/></svg></div>
<div class="c " style="left:1044.60px;width:132.80px"><svg class="dots" width="72" height="10" viewBox="0 0 72 10"><circle cx="4.8" cy="5" r="4.8" fill="#e0251b"/><circle cx="19.8" cy="5" r="4.8" fill="#e0251b"/><circle cx="34.8" cy="5" r="4.8" fill="#e0251b"/><circle cx="49.8" cy="5" r="4.8" fill="#d9d9d9"/><circle cx="64.8" cy="5" r="4.8" fill="#d9d9d9"/></svg></div>
<div class="c " style="left:1176.40px;width:101.80px"><svg class="stars" width="72" height="12" viewBox="0 0 72 12"><path transform="translate(0.00,0)" d="M6 0.6 L7.6 4.2 L11.5 4.5 L8.5 7.1 L9.4 10.9 L6 8.9 L2.6 10.9 L3.5 7.1 L0.5 4.5 L4.4 4.2Z" fill="#ecc800"/><path transform="translate(14.96,0)" d="M6 0.6 L7.6 4.2 L11.5 4.5 L8.5 7.1 L9.4 10.9 L6 8.9 L2.6 10.9 L3.5 7.1 L0.5 4.5 L4.4 4.2Z" fill="#ecc800"/><path transform="translate(29.92,0)" d="M6 0.6 L7.6 4.2 L11.5 4.5 L8.5 7.1 L9.4 10.9 L6 8.9 L2.6 10.9 L3.5 7.1 L0.5 4.5 L4.4 4.2Z" fill="#ecc800"/><path transform="translate(44.88,0)" d="M6 0.6 L7.6 4.2 L11.5 4.5 L8.5 7.1 L9.4 10.9 L6 8.9 L2.6 10.9 L3.5 7.1 L0.5 4.5 L4.4 4.2Z" fill="#ecc800"/><path transform="translate(59.84,0)" d="M6 0.6 L7.6 4.2 L11.5 4.5 L8.5 7.1 L9.4 10.9 L6 8.9 L2.6 10.9 L3.5 7.1 L0.5 4.5 L4.4 4.2Z" fill="#dadada"/></svg></div>
<div class="c rl" style="left:1277.20px;width:91.00px">12</div>
<div class="c " style="left:1367.20px;width:157.80px"></div>
</div>
<div class="row" style="top:322.42px">
<div class="c num" style="left:0.00px;width:34.00px">10</div>
<div class="c " style="left:33.00px;width:229.30px">Hardware Maintenance Services</div>
<div class="c " style="left:261.30px;width:251.40px"></div>
<div class="c " style="left:511.70px;width:199.70px">No following the SLA or insufficient</div>
<div class="c pc" style="left:710.40px;width:227.70px"><span class="pill ca">Availability</span></div>
<div class="c " style="left:937.10px;width:108.50px"><svg class="av" width="25.5" height="25.5" viewBox="0 0 25 25"><circle cx="12.5" cy="12.5" r="12" fill="#fff" stroke="#e9e9e9" stroke-width="1"/><path d="M6.5 25 Q7 21.2 10 20.6 L15 20.6 Q18.6 21.2 19.5 25Z" fill="#dfe3f3"/><path d="M9.6 22.2 H14.2 V24.4 H9.6Z" fill="#41447e"/><ellipse cx="11.8" cy="13.6" rx="5.6" ry="7.6" fill="#ad825c"/><path d="M6.1 13 Q5.6 7.5 7.2 5.6 Q8.5 3.9 11.8 3.9 Q15.6 3.9 16.6 5.8 Q17.8 8 17.4 12.6 Q16.8 9.2 15.6 8.6 Q12 9.8 8 8.7 Q6.8 10 6.1 13Z" fill="#141414"/><path d="M7.6 12.2 H10.4 M13.2 12.2 H16" stroke="#4d3522" stroke-width="1.1"/></svg></div>
<div class="c " style="left:1044.60px;width:132.80px"><svg class="dots" width="72" height="10" viewBox="0 0 72 10"><circle cx="4.8" cy="5" r="4.8" fill="#e0251b"/><circle cx="19.8" cy="5" r="4.8" fill="#e0251b"/><circle cx="34.8" cy="5" r="4.8" fill="#e0251b"/><circle cx="49.8" cy="5" r="4.8" fill="#e0251b"/><circle cx="64.8" cy="5" r="4.8" fill="#d9d9d9"/></svg></div>
<div class="c " style="left:1176.40px;width:101.80px"><svg class="stars" width="72" height="12" viewBox="0 0 72 12"><path transform="translate(0.00,0)" d="M6 0.6 L7.6 4.2 L11.5 4.5 L8.5 7.1 L9.4 10.9 L6 8.9 L2.6 10.9 L3.5 7.1 L0.5 4.5 L4.4 4.2Z" fill="#ecc800"/><path transform="translate(14.96,0)" d="M6 0.6 L7.6 4.2 L11.5 4.5 L8.5 7.1 L9.4 10.9 L6 8.9 L2.6 10.9 L3.5 7.1 L0.5 4.5 L4.4 4.2Z" fill="#ecc800"/><path transform="translate(29.92,0)" d="M6 0.6 L7.6 4.2 L11.5 4.5 L8.5 7.1 L9.4 10.9 L6 8.9 L2.6 10.9 L3.5 7.1 L0.5 4.5 L4.4 4.2Z" fill="#ecc800"/><path transform="translate(44.88,0)" d="M6 0.6 L7.6 4.2 L11.5 4.5 L8.5 7.1 L9.4 10.9 L6 8.9 L2.6 10.9 L3.5 7.1 L0.5 4.5 L4.4 4.2Z" fill="#ecc800"/><path transform="translate(59.84,0)" d="M6 0.6 L7.6 4.2 L11.5 4.5 L8.5 7.1 L9.4 10.9 L6 8.9 L2.6 10.9 L3.5 7.1 L0.5 4.5 L4.4 4.2Z" fill="#dadada"/></svg></div>
<div class="c rl" style="left:1277.20px;width:91.00px">16</div>
<div class="c " style="left:1367.20px;width:157.80px"><span class="tp ts">Risk Sharing</span></div>
</div>
<div class="row" style="top:354.70px">
<div class="c num" style="left:0.00px;width:34.00px">11</div>
<div class="c " style="left:33.00px;width:229.30px">Business Compliance</div>
<div class="c " style="left:261.30px;width:251.40px"></div>
<div class="c " style="left:511.70px;width:199.70px">Business Continuity Plans do not</div>
<div class="c pc" style="left:710.40px;width:227.70px"><span class="pill ci">Integrity</span><span class="pill ca">Availability</span></div>
<div class="c " style="left:937.10px;width:108.50px"><svg class="av" width="25.5" height="25.5" viewBox="0 0 25 25"><circle cx="12.5" cy="12.5" r="12" fill="#fff" stroke="#e9e9e9" stroke-width="1"/><path d="M6.5 25 Q7 21.2 10 20.6 L15 20.6 Q18.6 21.2 19.5 25Z" fill="#dfe3f3"/><path d="M9.6 22.2 H14.2 V24.4 H9.6Z" fill="#41447e"/><ellipse cx="11.8" cy="13.6" rx="5.6" ry="7.6" fill="#ad825c"/><path d="M6.1 13 Q5.6 7.5 7.2 5.6 Q8.5 3.9 11.8 3.9 Q15.6 3.9 16.6 5.8 Q17.8 8 17.4 12.6 Q16.8 9.2 15.6 8.6 Q12 9.8 8 8.7 Q6.8 10 6.1 13Z" fill="#141414"/><path d="M7.6 12.2 H10.4 M13.2 12.2 H16" stroke="#4d3522" stroke-width="1.1"/></svg></div>
<div class="c " style="left:1044.60px;width:132.80px"><svg class="dots" width="72" height="10" viewBox="0 0 72 10"><circle cx="4.8" cy="5" r="4.8" fill="#e0251b"/><circle cx="19.8" cy="5" r="4.8" fill="#e0251b"/><circle cx="34.8" cy="5" r="4.8" fill="#e0251b"/><circle cx="49.8" cy="5" r="4.8" fill="#e0251b"/><circle cx="64.8" cy="5" r="4.8" fill="#e0251b"/></svg></div>
<div class="c " style="left:1176.40px;width:101.80px"><svg class="stars" width="72" height="12" viewBox="0 0 72 12"><path transform="translate(0.00,0)" d="M6 0.6 L7.6 4.2 L11.5 4.5 L8.5 7.1 L9.4 10.9 L6 8.9 L2.6 10.9 L3.5 7.1 L0.5 4.5 L4.4 4.2Z" fill="#ecc800"/><path transform="translate(14.96,0)" d="M6 0.6 L7.6 4.2 L11.5 4.5 L8.5 7.1 L9.4 10.9 L6 8.9 L2.6 10.9 L3.5 7.1 L0.5 4.5 L4.4 4.2Z" fill="#dadada"/><path transform="translate(29.92,0)" d="M6 0.6 L7.6 4.2 L11.5 4.5 L8.5 7.1 L9.4 10.9 L6 8.9 L2.6 10.9 L3.5 7.1 L0.5 4.5 L4.4 4.2Z" fill="#dadada"/><path transform="translate(44.88,0)" d="M6 0.6 L7.6 4.2 L11.5 4.5 L8.5 7.1 L9.4 10.9 L6 8.9 L2.6 10.9 L3.5 7.1 L0.5 4.5 L4.4 4.2Z" fill="#dadada"/><path transform="translate(59.84,0)" d="M6 0.6 L7.6 4.2 L11.5 4.5 L8.5 7.1 L9.4 10.9 L6 8.9 L2.6 10.9 L3.5 7.1 L0.5 4.5 L4.4 4.2Z" fill="#dadada"/></svg></div>
<div class="c rl" style="left:1277.20px;width:91.00px">5</div>
<div class="c " style="left:1367.20px;width:157.80px"><span class="tp tr">Risk Retention (Acceptan...</span></div>
</div>
<div class="row" style="top:386.98px">
<div class="c num" style="left:0.00px;width:34.00px">12</div>
<div class="c " style="left:33.00px;width:229.30px">Paper Data</div>
<div class="c " style="left:261.30px;width:251.40px"></div>
<div class="c " style="left:511.70px;width:199.70px">Procedures for classified information</div>
<div class="c pc" style="left:710.40px;width:227.70px"><span class="pill cc">Confidentiality</span><span class="pill ci">Integrity</span></div>
<div class="c " style="left:937.10px;width:108.50px"><svg class="av" width="25.5" height="25.5" viewBox="0 0 25 25"><circle cx="12.5" cy="12.5" r="12" fill="#fff" stroke="#e9e9e9" stroke-width="1"/><path d="M6.5 25 Q7 21.2 10 20.6 L15 20.6 Q18.6 21.2 19.5 25Z" fill="#dfe3f3"/><path d="M9.6 22.2 H14.2 V24.4 H9.6Z" fill="#41447e"/><ellipse cx="11.8" cy="13.6" rx="5.6" ry="7.6" fill="#ad825c"/><path d="M6.1 13 Q5.6 7.5 7.2 5.6 Q8.5 3.9 11.8 3.9 Q15.6 3.9 16.6 5.8 Q17.8 8 17.4 12.6 Q16.8 9.2 15.6 8.6 Q12 9.8 8 8.7 Q6.8 10 6.1 13Z" fill="#141414"/><path d="M7.6 12.2 H10.4 M13.2 12.2 H16" stroke="#4d3522" stroke-width="1.1"/></svg></div>
<div class="c " style="left:1044.60px;width:132.80px"><svg class="dots" width="72" height="10" viewBox="0 0 72 10"><circle cx="4.8" cy="5" r="4.8" fill="#e0251b"/><circle cx="19.8" cy="5" r="4.8" fill="#e0251b"/><circle cx="34.8" cy="5" r="4.8" fill="#e0251b"/><circle cx="49.8" cy="5" r="4.8" fill="#d9d9d9"/><circle cx="64.8" cy="5" r="4.8" fill="#d9d9d9"/></svg></div>
<div class="c " style="left:1176.40px;width:101.80px"><svg class="stars" width="72" height="12" viewBox="0 0 72 12"><path transform="translate(0.00,0)" d="M6 0.6 L7.6 4.2 L11.5 4.5 L8.5 7.1 L9.4 10.9 L6 8.9 L2.6 10.9 L3.5 7.1 L0.5 4.5 L4.4 4.2Z" fill="#ecc800"/><path transform="translate(14.96,0)" d="M6 0.6 L7.6 4.2 L11.5 4.5 L8.5 7.1 L9.4 10.9 L6 8.9 L2.6 10.9 L3.5 7.1 L0.5 4.5 L4.4 4.2Z" fill="#ecc800"/><path transform="translate(29.92,0)" d="M6 0.6 L7.6 4.2 L11.5 4.5 L8.5 7.1 L9.4 10.9 L6 8.9 L2.6 10.9 L3.5 7.1 L0.5 4.5 L4.4 4.2Z" fill="#ecc800"/><path transform="translate(44.88,0)" d="M6 0.6 L7.6 4.2 L11.5 4.5 L8.5 7.1 L9.4 10.9 L6 8.9 L2.6 10.9 L3.5 7.1 L0.5 4.5 L4.4 4.2Z" fill="#ecc800"/><path transform="translate(59.84,0)" d="M6 0.6 L7.6 4.2 L11.5 4.5 L8.5 7.1 L9.4 10.9 L6 8.9 L2.6 10.9 L3.5 7.1 L0.5 4.5 L4.4 4.2Z" fill="#dadada"/></svg></div>
<div class="c rl" style="left:1277.20px;width:91.00px">12</div>
<div class="c " style="left:1367.20px;width:157.80px"><span class="tp tm">Risk Modification</span></div>
</div>
<div class="row" style="top:419.26px">
<div class="c num" style="left:0.00px;width:34.00px">13</div>
<div class="c " style="left:33.00px;width:229.30px">Office</div>
<div class="c " style="left:261.30px;width:251.40px"></div>
<div class="c " style="left:511.70px;width:199.70px">Insufficient physical protection of</div>
<div class="c pc" style="left:710.40px;width:227.70px"><span class="pill cc">Confidentiality</span><span class="pill ca">Availability</span></div>
<div class="c " style="left:937.10px;width:108.50px"><svg class="av" width="25.5" height="25.5" viewBox="0 0 25 25"><circle cx="12.5" cy="12.5" r="12" fill="#fff" stroke="#e9e9e9" stroke-width="1"/><path d="M6.5 25 Q7 21.2 10 20.6 L15 20.6 Q18.6 21.2 19.5 25Z" fill="#dfe3f3"/><path d="M9.6 22.2 H14.2 V24.4 H9.6Z" fill="#41447e"/><ellipse cx="11.8" cy="13.6" rx="5.6" ry="7.6" fill="#ad825c"/><path d="M6.1 13 Q5.6 7.5 7.2 5.6 Q8.5 3.9 11.8 3.9 Q15.6 3.9 16.6 5.8 Q17.8 8 17.4 12.6 Q16.8 9.2 15.6 8.6 Q12 9.8 8 8.7 Q6.8 10 6.1 13Z" fill="#141414"/><path d="M7.6 12.2 H10.4 M13.2 12.2 H16" stroke="#4d3522" stroke-width="1.1"/></svg></div>
<div class="c " style="left:1044.60px;width:132.80px"><svg class="dots" width="72" height="10" viewBox="0 0 72 10"><circle cx="4.8" cy="5" r="4.8" fill="#e0251b"/><circle cx="19.8" cy="5" r="4.8" fill="#e0251b"/><circle cx="34.8" cy="5" r="4.8" fill="#e0251b"/><circle cx="49.8" cy="5" r="4.8" fill="#e0251b"/><circle cx="64.8" cy="5" r="4.8" fill="#d9d9d9"/></svg></div>
<div class="c " style="left:1176.40px;width:101.80px"><svg class="stars" width="72" height="12" viewBox="0 0 72 12"><path transform="translate(0.00,0)" d="M6 0.6 L7.6 4.2 L11.5 4.5 L8.5 7.1 L9.4 10.9 L6 8.9 L2.6 10.9 L3.5 7.1 L0.5 4.5 L4.4 4.2Z" fill="#ecc800"/><path transform="translate(14.96,0)" d="M6 0.6 L7.6 4.2 L11.5 4.5 L8.5 7.1 L9.4 10.9 L6 8.9 L2.6 10.9 L3.5 7.1 L0.5 4.5 L4.4 4.2Z" fill="#ecc800"/><path transform="translate(29.92,0)" d="M6 0.6 L7.6 4.2 L11.5 4.5 L8.5 7.1 L9.4 10.9 L6 8.9 L2.6 10.9 L3.5 7.1 L0.5 4.5 L4.4 4.2Z" fill="#dadada"/><path transform="translate(44.88,0)" d="M6 0.6 L7.6 4.2 L11.5 4.5 L8.5 7.1 L9.4 10.9 L6 8.9 L2.6 10.9 L3.5 7.1 L0.5 4.5 L4.4 4.2Z" fill="#dadada"/><path transform="translate(59.84,0)" d="M6 0.6 L7.6 4.2 L11.5 4.5 L8.5 7.1 L9.4 10.9 L6 8.9 L2.6 10.9 L3.5 7.1 L0.5 4.5 L4.4 4.2Z" fill="#dadada"/></svg></div>
<div class="c rl" style="left:1277.20px;width:91.00px">8</div>
<div class="c " style="left:1367.20px;width:157.80px"><span class="tp tr">Risk Retention (Acceptan...</span></div>
</div>
<div class="row" style="top:451.54px">
<div class="c num" style="left:0.00px;width:34.00px">14</div>
<div class="c " style="left:33.00px;width:229.30px">Servers</div>
<div class="c " style="left:261.30px;width:251.40px"></div>
<div class="c " style="left:511.70px;width:199.70px">Lack of proper DDoS mitigation measures</div>
<div class="c pc" style="left:710.40px;width:227.70px"><span class="pill ci">Integrity</span><span class="pill ca">Availability</span></div>
<div class="c " style="left:937.10px;width:108.50px"><svg class="av" width="25.5" height="25.5" viewBox="0 0 25 25"><circle cx="12.5" cy="12.5" r="12" fill="#fff" stroke="#e9e9e9" stroke-width="1"/><path d="M6.5 25 Q7 21.2 10 20.6 L15 20.6 Q18.6 21.2 19.5 25Z" fill="#dfe3f3"/><path d="M9.6 22.2 H14.2 V24.4 H9.6Z" fill="#41447e"/><ellipse cx="11.8" cy="13.6" rx="5.6" ry="7.6" fill="#ad825c"/><path d="M6.1 13 Q5.6 7.5 7.2 5.6 Q8.5 3.9 11.8 3.9 Q15.6 3.9 16.6 5.8 Q17.8 8 17.4 12.6 Q16.8 9.2 15.6 8.6 Q12 9.8 8 8.7 Q6.8 10 6.1 13Z" fill="#141414"/><path d="M7.6 12.2 H10.4 M13.2 12.2 H16" stroke="#4d3522" stroke-width="1.1"/></svg></div>
<div class="c " style="left:1044.60px;width:132.80px"><svg class="dots" width="72" height="10" viewBox="0 0 72 10"><circle cx="4.8" cy="5" r="4.8" fill="#e0251b"/><circle cx="19.8" cy="5" r="4.8" fill="#e0251b"/><circle cx="34.8" cy="5" r="4.8" fill="#e0251b"/><circle cx="49.8" cy="5" r="4.8" fill="#e0251b"/><circle cx="64.8" cy="5" r="4.8" fill="#d9d9d9"/></svg></div>
<div class="c " style="left:1176.40px;width:101.80px"><svg class="stars" width="72" height="12" viewBox="0 0 72 12"><path transform="translate(0.00,0)" d="M6 0.6 L7.6 4.2 L11.5 4.5 L8.5 7.1 L9.4 10.9 L6 8.9 L2.6 10.9 L3.5 7.1 L0.5 4.5 L4.4 4.2Z" fill="#ecc800"/><path transform="translate(14.96,0)" d="M6 0.6 L7.6 4.2 L11.5 4.5 L8.5 7.1 L9.4 10.9 L6 8.9 L2.6 10.9 L3.5 7.1 L0.5 4.5 L4.4 4.2Z" fill="#ecc800"/><path transform="translate(29.92,0)" d="M6 0.6 L7.6 4.2 L11.5 4.5 L8.5 7.1 L9.4 10.9 L6 8.9 L2.6 10.9 L3.5 7.1 L0.5 4.5 L4.4 4.2Z" fill="#dadada"/><path transform="translate(44.88,0)" d="M6 0.6 L7.6 4.2 L11.5 4.5 L8.5 7.1 L9.4 10.9 L6 8.9 L2.6 10.9 L3.5 7.1 L0.5 4.5 L4.4 4.2Z" fill="#dadada"/><path transform="translate(59.84,0)" d="M6 0.6 L7.6 4.2 L11.5 4.5 L8.5 7.1 L9.4 10.9 L6 8.9 L2.6 10.9 L3.5 7.1 L0.5 4.5 L4.4 4.2Z" fill="#dadada"/></svg></div>
<div class="c rl" style="left:1277.20px;width:91.00px">8</div>
<div class="c " style="left:1367.20px;width:157.80px"><span class="tp tm">Risk Modification</span></div>
</div>
<div class="row" style="top:483.82px">
<div class="c num" style="left:0.00px;width:34.00px">15</div>
<div class="c " style="left:33.00px;width:229.30px">Sensitive Data</div>
<div class="c " style="left:261.30px;width:251.40px"></div>
<div class="c " style="left:511.70px;width:199.70px">Processes for segragation of duties</div>
<div class="c pc" style="left:710.40px;width:227.70px"><span class="pill cc">Confidentiality</span><span class="pill ca">Availability</span></div>
<div class="c " style="left:937.10px;width:108.50px"><svg class="av" width="25.5" height="25.5" viewBox="0 0 25 25"><circle cx="12.5" cy="12.5" r="12" fill="#fff" stroke="#e9e9e9" stroke-width="1"/><path d="M6.5 25 Q7 21.2 10 20.6 L15 20.6 Q18.6 21.2 19.5 25Z" fill="#dfe3f3"/><path d="M9.6 22.2 H14.2 V24.4 H9.6Z" fill="#41447e"/><ellipse cx="11.8" cy="13.6" rx="5.6" ry="7.6" fill="#ad825c"/><path d="M6.1 13 Q5.6 7.5 7.2 5.6 Q8.5 3.9 11.8 3.9 Q15.6 3.9 16.6 5.8 Q17.8 8 17.4 12.6 Q16.8 9.2 15.6 8.6 Q12 9.8 8 8.7 Q6.8 10 6.1 13Z" fill="#141414"/><path d="M7.6 12.2 H10.4 M13.2 12.2 H16" stroke="#4d3522" stroke-width="1.1"/></svg></div>
<div class="c " style="left:1044.60px;width:132.80px"><svg class="dots" width="72" height="10" viewBox="0 0 72 10"><circle cx="4.8" cy="5" r="4.8" fill="#e0251b"/><circle cx="19.8" cy="5" r="4.8" fill="#e0251b"/><circle cx="34.8" cy="5" r="4.8" fill="#e0251b"/><circle cx="49.8" cy="5" r="4.8" fill="#e0251b"/><circle cx="64.8" cy="5" r="4.8" fill="#e0251b"/></svg></div>
<div class="c " style="left:1176.40px;width:101.80px"><svg class="stars" width="72" height="12" viewBox="0 0 72 12"><path transform="translate(0.00,0)" d="M6 0.6 L7.6 4.2 L11.5 4.5 L8.5 7.1 L9.4 10.9 L6 8.9 L2.6 10.9 L3.5 7.1 L0.5 4.5 L4.4 4.2Z" fill="#ecc800"/><path transform="translate(14.96,0)" d="M6 0.6 L7.6 4.2 L11.5 4.5 L8.5 7.1 L9.4 10.9 L6 8.9 L2.6 10.9 L3.5 7.1 L0.5 4.5 L4.4 4.2Z" fill="#ecc800"/><path transform="translate(29.92,0)" d="M6 0.6 L7.6 4.2 L11.5 4.5 L8.5 7.1 L9.4 10.9 L6 8.9 L2.6 10.9 L3.5 7.1 L0.5 4.5 L4.4 4.2Z" fill="#ecc800"/><path transform="translate(44.88,0)" d="M6 0.6 L7.6 4.2 L11.5 4.5 L8.5 7.1 L9.4 10.9 L6 8.9 L2.6 10.9 L3.5 7.1 L0.5 4.5 L4.4 4.2Z" fill="#dadada"/><path transform="translate(59.84,0)" d="M6 0.6 L7.6 4.2 L11.5 4.5 L8.5 7.1 L9.4 10.9 L6 8.9 L2.6 10.9 L3.5 7.1 L0.5 4.5 L4.4 4.2Z" fill="#dadada"/></svg></div>
<div class="c rl" style="left:1277.20px;width:91.00px">15</div>
<div class="c " style="left:1367.20px;width:157.80px"><span class="tp tr">Risk Retention (Acceptan...</span></div>
</div>
<div class="row" style="top:516.10px">
<div class="c num" style="left:0.00px;width:34.00px">16</div>
<div class="c " style="left:33.00px;width:229.30px">Sensitive Data</div>
<div class="c " style="left:261.30px;width:251.40px"></div>
<div class="c " style="left:511.70px;width:199.70px">Weakness in the security of a data</div>
<div class="c pc" style="left:710.40px;width:227.70px"><span class="pill cc">Confidentiality</span><span class="pill ca">Availability</span></div>
<div class="c " style="left:937.10px;width:108.50px"><svg class="av" width="25.5" height="25.5" viewBox="0 0 25 25"><circle cx="12.5" cy="12.5" r="12" fill="#fff" stroke="#e9e9e9" stroke-width="1"/><path d="M6.5 25 Q7 21.2 10 20.6 L15 20.6 Q18.6 21.2 19.5 25Z" fill="#dfe3f3"/><path d="M9.6 22.2 H14.2 V24.4 H9.6Z" fill="#41447e"/><ellipse cx="11.8" cy="13.6" rx="5.6" ry="7.6" fill="#ad825c"/><path d="M6.1 13 Q5.6 7.5 7.2 5.6 Q8.5 3.9 11.8 3.9 Q15.6 3.9 16.6 5.8 Q17.8 8 17.4 12.6 Q16.8 9.2 15.6 8.6 Q12 9.8 8 8.7 Q6.8 10 6.1 13Z" fill="#141414"/><path d="M7.6 12.2 H10.4 M13.2 12.2 H16" stroke="#4d3522" stroke-width="1.1"/></svg></div>
<div class="c " style="left:1044.60px;width:132.80px"><svg class="dots" width="72" height="10" viewBox="0 0 72 10"><circle cx="4.8" cy="5" r="4.8" fill="#e0251b"/><circle cx="19.8" cy="5" r="4.8" fill="#e0251b"/><circle cx="34.8" cy="5" r="4.8" fill="#e0251b"/><circle cx="49.8" cy="5" r="4.8" fill="#e0251b"/><circle cx="64.8" cy="5" r="4.8" fill="#e0251b"/></svg></div>
<div class="c " style="left:1176.40px;width:101.80px"><svg class="stars" width="72" height="12" viewBox="0 0 72 12"><path transform="translate(0.00,0)" d="M6 0.6 L7.6 4.2 L11.5 4.5 L8.5 7.1 L9.4 10.9 L6 8.9 L2.6 10.9 L3.5 7.1 L0.5 4.5 L4.4 4.2Z" fill="#ecc800"/><path transform="translate(14.96,0)" d="M6 0.6 L7.6 4.2 L11.5 4.5 L8.5 7.1 L9.4 10.9 L6 8.9 L2.6 10.9 L3.5 7.1 L0.5 4.5 L4.4 4.2Z" fill="#ecc800"/><path transform="translate(29.92,0)" d="M6 0.6 L7.6 4.2 L11.5 4.5 L8.5 7.1 L9.4 10.9 L6 8.9 L2.6 10.9 L3.5 7.1 L0.5 4.5 L4.4 4.2Z" fill="#ecc800"/><path transform="translate(44.88,0)" d="M6 0.6 L7.6 4.2 L11.5 4.5 L8.5 7.1 L9.4 10.9 L6 8.9 L2.6 10.9 L3.5 7.1 L0.5 4.5 L4.4 4.2Z" fill="#ecc800"/><path transform="translate(59.84,0)" d="M6 0.6 L7.6 4.2 L11.5 4.5 L8.5 7.1 L9.4 10.9 L6 8.9 L2.6 10.9 L3.5 7.1 L0.5 4.5 L4.4 4.2Z" fill="#dadada"/></svg></div>
<div class="c rl" style="left:1277.20px;width:91.00px">20</div>
<div class="c " style="left:1367.20px;width:157.80px"><span class="tp tv">Risk Avoidence</span></div>
</div>
<div class="row" style="top:548.38px">
<div class="c num" style="left:0.00px;width:34.00px">17</div>
<div class="c " style="left:33.00px;width:229.30px">business compliance</div>
<div class="c " style="left:261.30px;width:251.40px"></div>
<div class="c " style="left:511.70px;width:199.70px">Weakness in implementing Threat</div>
<div class="c pc" style="left:710.40px;width:227.70px"><span class="pill cc">Confidentiality</span><span class="pill ci">Integrity</span><span class="pill ca">Availability</span></div>
<div class="c " style="left:937.10px;width:108.50px"><svg class="av" width="25.5" height="25.5" viewBox="0 0 25 25"><circle cx="12.5" cy="12.5" r="12" fill="#fff" stroke="#e9e9e9" stroke-width="1"/><path d="M6.5 25 Q7 21.2 10 20.6 L15 20.6 Q18.6 21.2 19.5 25Z" fill="#dfe3f3"/><path d="M9.6 22.2 H14.2 V24.4 H9.6Z" fill="#41447e"/><ellipse cx="11.8" cy="13.6" rx="5.6" ry="7.6" fill="#ad825c"/><path d="M6.1 13 Q5.6 7.5 7.2 5.6 Q8.5 3.9 11.8 3.9 Q15.6 3.9 16.6 5.8 Q17.8 8 17.4 12.6 Q16.8 9.2 15.6 8.6 Q12 9.8 8 8.7 Q6.8 10 6.1 13Z" fill="#141414"/><path d="M7.6 12.2 H10.4 M13.2 12.2 H16" stroke="#4d3522" stroke-width="1.1"/></svg></div>
<div class="c " style="left:1044.60px;width:132.80px"><svg class="dots" width="72" height="10" viewBox="0 0 72 10"><circle cx="4.8" cy="5" r="4.8" fill="#e0251b"/><circle cx="19.8" cy="5" r="4.8" fill="#e0251b"/><circle cx="34.8" cy="5" r="4.8" fill="#e0251b"/><circle cx="49.8" cy="5" r="4.8" fill="#e0251b"/><circle cx="64.8" cy="5" r="4.8" fill="#d9d9d9"/></svg></div>
<div class="c " style="left:1176.40px;width:101.80px"><svg class="stars" width="72" height="12" viewBox="0 0 72 12"><path transform="translate(0.00,0)" d="M6 0.6 L7.6 4.2 L11.5 4.5 L8.5 7.1 L9.4 10.9 L6 8.9 L2.6 10.9 L3.5 7.1 L0.5 4.5 L4.4 4.2Z" fill="#ecc800"/><path transform="translate(14.96,0)" d="M6 0.6 L7.6 4.2 L11.5 4.5 L8.5 7.1 L9.4 10.9 L6 8.9 L2.6 10.9 L3.5 7.1 L0.5 4.5 L4.4 4.2Z" fill="#ecc800"/><path transform="translate(29.92,0)" d="M6 0.6 L7.6 4.2 L11.5 4.5 L8.5 7.1 L9.4 10.9 L6 8.9 L2.6 10.9 L3.5 7.1 L0.5 4.5 L4.4 4.2Z" fill="#dadada"/><path transform="translate(44.88,0)" d="M6 0.6 L7.6 4.2 L11.5 4.5 L8.5 7.1 L9.4 10.9 L6 8.9 L2.6 10.9 L3.5 7.1 L0.5 4.5 L4.4 4.2Z" fill="#dadada"/><path transform="translate(59.84,0)" d="M6 0.6 L7.6 4.2 L11.5 4.5 L8.5 7.1 L9.4 10.9 L6 8.9 L2.6 10.9 L3.5 7.1 L0.5 4.5 L4.4 4.2Z" fill="#dadada"/></svg></div>
<div class="c rl" style="left:1277.20px;width:91.00px">8</div>
<div class="c " style="left:1367.20px;width:157.80px"><span class="tp tr">Risk Retention (Acceptan...</span></div>
</div>
<div class="row" style="top:580.66px">
<div class="c num" style="left:0.00px;width:34.00px">18</div>
<div class="c " style="left:33.00px;width:229.30px">Business Compliance</div>
<div class="c " style="left:261.30px;width:251.40px"></div>
<div class="c " style="left:511.70px;width:199.70px">A formal process for legal compliance</div>
<div class="c pc" style="left:710.40px;width:227.70px"><span class="pill cc">Confidentiality</span><span class="pill ci">Integrity</span><span class="pill ca">Availability</span></div>
<div class="c " style="left:937.10px;width:108.50px"><svg class="av" width="25.5" height="25.5" viewBox="0 0 25 25"><circle cx="12.5" cy="12.5" r="12" fill="#fff" stroke="#e9e9e9" stroke-width="1"/><path d="M6.5 25 Q7 21.2 10 20.6 L15 20.6 Q18.6 21.2 19.5 25Z" fill="#dfe3f3"/><path d="M9.6 22.2 H14.2 V24.4 H9.6Z" fill="#41447e"/><ellipse cx="11.8" cy="13.6" rx="5.6" ry="7.6" fill="#ad825c"/><path d="M6.1 13 Q5.6 7.5 7.2 5.6 Q8.5 3.9 11.8 3.9 Q15.6 3.9 16.6 5.8 Q17.8 8 17.4 12.6 Q16.8 9.2 15.6 8.6 Q12 9.8 8 8.7 Q6.8 10 6.1 13Z" fill="#141414"/><path d="M7.6 12.2 H10.4 M13.2 12.2 H16" stroke="#4d3522" stroke-width="1.1"/></svg></div>
<div class="c " style="left:1044.60px;width:132.80px"><svg class="dots" width="72" height="10" viewBox="0 0 72 10"><circle cx="4.8" cy="5" r="4.8" fill="#e0251b"/><circle cx="19.8" cy="5" r="4.8" fill="#e0251b"/><circle cx="34.8" cy="5" r="4.8" fill="#e0251b"/><circle cx="49.8" cy="5" r="4.8" fill="#e0251b"/><circle cx="64.8" cy="5" r="4.8" fill="#e0251b"/></svg></div>
<div class="c " style="left:1176.40px;width:101.80px"><svg class="stars" width="72" height="12" viewBox="0 0 72 12"><path transform="translate(0.00,0)" d="M6 0.6 L7.6 4.2 L11.5 4.5 L8.5 7.1 L9.4 10.9 L6 8.9 L2.6 10.9 L3.5 7.1 L0.5 4.5 L4.4 4.2Z" fill="#ecc800"/><path transform="translate(14.96,0)" d="M6 0.6 L7.6 4.2 L11.5 4.5 L8.5 7.1 L9.4 10.9 L6 8.9 L2.6 10.9 L3.5 7.1 L0.5 4.5 L4.4 4.2Z" fill="#dadada"/><path transform="translate(29.92,0)" d="M6 0.6 L7.6 4.2 L11.5 4.5 L8.5 7.1 L9.4 10.9 L6 8.9 L2.6 10.9 L3.5 7.1 L0.5 4.5 L4.4 4.2Z" fill="#dadada"/><path transform="translate(44.88,0)" d="M6 0.6 L7.6 4.2 L11.5 4.5 L8.5 7.1 L9.4 10.9 L6 8.9 L2.6 10.9 L3.5 7.1 L0.5 4.5 L4.4 4.2Z" fill="#dadada"/><path transform="translate(59.84,0)" d="M6 0.6 L7.6 4.2 L11.5 4.5 L8.5 7.1 L9.4 10.9 L6 8.9 L2.6 10.9 L3.5 7.1 L0.5 4.5 L4.4 4.2Z" fill="#dadada"/></svg></div>
<div class="c rl" style="left:1277.20px;width:91.00px">5</div>
<div class="c " style="left:1367.20px;width:157.80px"><span class="tp tr">Risk Retention (Acceptan...</span></div>
</div>
<div class="row" style="top:612.94px">
<div class="c num" style="left:0.00px;width:34.00px">19</div>
<div class="c " style="left:33.00px;width:229.30px">Point-of-Sale (POS) Systems</div>
<div class="c " style="left:261.30px;width:251.40px"></div>
<div class="c " style="left:511.70px;width:199.70px">Lack of endpoint protection and</div>
<div class="c pc" style="left:710.40px;width:227.70px"><span class="pill cc">Confidentiality</span><span class="pill ca">Availability</span></div>
<div class="c " style="left:937.10px;width:108.50px"><svg class="av" width="25.5" height="25.5" viewBox="0 0 25 25"><circle cx="12.5" cy="12.5" r="12" fill="#fff" stroke="#e9e9e9" stroke-width="1"/><path d="M6.5 25 Q7 21.2 10 20.6 L15 20.6 Q18.6 21.2 19.5 25Z" fill="#dfe3f3"/><path d="M9.6 22.2 H14.2 V24.4 H9.6Z" fill="#41447e"/><ellipse cx="11.8" cy="13.6" rx="5.6" ry="7.6" fill="#ad825c"/><path d="M6.1 13 Q5.6 7.5 7.2 5.6 Q8.5 3.9 11.8 3.9 Q15.6 3.9 16.6 5.8 Q17.8 8 17.4 12.6 Q16.8 9.2 15.6 8.6 Q12 9.8 8 8.7 Q6.8 10 6.1 13Z" fill="#141414"/><path d="M7.6 12.2 H10.4 M13.2 12.2 H16" stroke="#4d3522" stroke-width="1.1"/></svg></div>
<div class="c " style="left:1044.60px;width:132.80px"><svg class="dots" width="72" height="10" viewBox="0 0 72 10"><circle cx="4.8" cy="5" r="4.8" fill="#e0251b"/><circle cx="19.8" cy="5" r="4.8" fill="#e0251b"/><circle cx="34.8" cy="5" r="4.8" fill="#e0251b"/><circle cx="49.8" cy="5" r="4.8" fill="#e0251b"/><circle cx="64.8" cy="5" r="4.8" fill="#d9d9d9"/></svg></div>
<div class="c " style="left:1176.40px;width:101.80px"><svg class="stars" width="72" height="12" viewBox="0 0 72 12"><path transform="translate(0.00,0)" d="M6 0.6 L7.6 4.2 L11.5 4.5 L8.5 7.1 L9.4 10.9 L6 8.9 L2.6 10.9 L3.5 7.1 L0.5 4.5 L4.4 4.2Z" fill="#ecc800"/><path transform="translate(14.96,0)" d="M6 0.6 L7.6 4.2 L11.5 4.5 L8.5 7.1 L9.4 10.9 L6 8.9 L2.6 10.9 L3.5 7.1 L0.5 4.5 L4.4 4.2Z" fill="#ecc800"/><path transform="translate(29.92,0)" d="M6 0.6 L7.6 4.2 L11.5 4.5 L8.5 7.1 L9.4 10.9 L6 8.9 L2.6 10.9 L3.5 7.1 L0.5 4.5 L4.4 4.2Z" fill="#ecc800"/><path transform="translate(44.88,0)" d="M6 0.6 L7.6 4.2 L11.5 4.5 L8.5 7.1 L9.4 10.9 L6 8.9 L2.6 10.9 L3.5 7.1 L0.5 4.5 L4.4 4.2Z" fill="#ecc800"/><path transform="translate(59.84,0)" d="M6 0.6 L7.6 4.2 L11.5 4.5 L8.5 7.1 L9.4 10.9 L6 8.9 L2.6 10.9 L3.5 7.1 L0.5 4.5 L4.4 4.2Z" fill="#dadada"/></svg></div>
<div class="c rl" style="left:1277.20px;width:91.00px">16</div>
<div class="c " style="left:1367.20px;width:157.80px"><span class="tp tv">Risk Avoidence</span></div>
</div>
<div class="row" style="top:645.22px">
<div class="c num" style="left:0.00px;width:34.00px">20</div>
<div class="c " style="left:33.00px;width:229.30px">Freelance contractors and auditors</div>
<div class="c " style="left:261.30px;width:251.40px"></div>
<div class="c " style="left:511.70px;width:199.70px">Insufficient access controls and</div>
<div class="c pc" style="left:710.40px;width:227.70px"><span class="pill cc">Confidentiality</span><span class="pill ca">Availability</span></div>
<div class="c " style="left:937.10px;width:108.50px"><svg class="av" width="25.5" height="25.5" viewBox="0 0 25 25"><circle cx="12.5" cy="12.5" r="12" fill="#fff" stroke="#e9e9e9" stroke-width="1"/><path d="M6.5 25 Q7 21.2 10 20.6 L15 20.6 Q18.6 21.2 19.5 25Z" fill="#dfe3f3"/><path d="M9.6 22.2 H14.2 V24.4 H9.6Z" fill="#41447e"/><ellipse cx="11.8" cy="13.6" rx="5.6" ry="7.6" fill="#ad825c"/><path d="M6.1 13 Q5.6 7.5 7.2 5.6 Q8.5 3.9 11.8 3.9 Q15.6 3.9 16.6 5.8 Q17.8 8 17.4 12.6 Q16.8 9.2 15.6 8.6 Q12 9.8 8 8.7 Q6.8 10 6.1 13Z" fill="#141414"/><path d="M7.6 12.2 H10.4 M13.2 12.2 H16" stroke="#4d3522" stroke-width="1.1"/></svg></div>
<div class="c " style="left:1044.60px;width:132.80px"><svg class="dots" width="72" height="10" viewBox="0 0 72 10"><circle cx="4.8" cy="5" r="4.8" fill="#e0251b"/><circle cx="19.8" cy="5" r="4.8" fill="#e0251b"/><circle cx="34.8" cy="5" r="4.8" fill="#e0251b"/><circle cx="49.8" cy="5" r="4.8" fill="#e0251b"/><circle cx="64.8" cy="5" r="4.8" fill="#d9d9d9"/></svg></div>
<div class="c " style="left:1176.40px;width:101.80px"><svg class="stars" width="72" height="12" viewBox="0 0 72 12"><path transform="translate(0.00,0)" d="M6 0.6 L7.6 4.2 L11.5 4.5 L8.5 7.1 L9.4 10.9 L6 8.9 L2.6 10.9 L3.5 7.1 L0.5 4.5 L4.4 4.2Z" fill="#ecc800"/><path transform="translate(14.96,0)" d="M6 0.6 L7.6 4.2 L11.5 4.5 L8.5 7.1 L9.4 10.9 L6 8.9 L2.6 10.9 L3.5 7.1 L0.5 4.5 L4.4 4.2Z" fill="#ecc800"/><path transform="translate(29.92,0)" d="M6 0.6 L7.6 4.2 L11.5 4.5 L8.5 7.1 L9.4 10.9 L6 8.9 L2.6 10.9 L3.5 7.1 L0.5 4.5 L4.4 4.2Z" fill="#ecc800"/><path transform="translate(44.88,0)" d="M6 0.6 L7.6 4.2 L11.5 4.5 L8.5 7.1 L9.4 10.9 L6 8.9 L2.6 10.9 L3.5 7.1 L0.5 4.5 L4.4 4.2Z" fill="#dadada"/><path transform="translate(59.84,0)" d="M6 0.6 L7.6 4.2 L11.5 4.5 L8.5 7.1 L9.4 10.9 L6 8.9 L2.6 10.9 L3.5 7.1 L0.5 4.5 L4.4 4.2Z" fill="#dadada"/></svg></div>
<div class="c rl" style="left:1277.20px;width:91.00px">12</div>
<div class="c " style="left:1367.20px;width:157.80px"><span class="tp tm">Risk Modification</span></div>
</div>
<div class="row" style="top:677.50px">
<div class="c num" style="left:0.00px;width:34.00px">21</div>
<div class="c " style="left:33.00px;width:229.30px">Mobile phone</div>
<div class="c " style="left:261.30px;width:251.40px"></div>
<div class="c " style="left:511.70px;width:199.70px">Lack of regular software updates</div>
<div class="c pc" style="left:710.40px;width:227.70px"><span class="pill cc">Confidentiality</span><span class="pill ca">Availability</span></div>
<div class="c " style="left:937.10px;width:108.50px"><svg class="av" width="25.5" height="25.5" viewBox="0 0 25 25"><circle cx="12.5" cy="12.5" r="12" fill="#fff" stroke="#e9e9e9" stroke-width="1"/><path d="M6.5 25 Q7 21.2 10 20.6 L15 20.6 Q18.6 21.2 19.5 25Z" fill="#dfe3f3"/><path d="M9.6 22.2 H14.2 V24.4 H9.6Z" fill="#41447e"/><ellipse cx="11.8" cy="13.6" rx="5.6" ry="7.6" fill="#ad825c"/><path d="M6.1 13 Q5.6 7.5 7.2 5.6 Q8.5 3.9 11.8 3.9 Q15.6 3.9 16.6 5.8 Q17.8 8 17.4 12.6 Q16.8 9.2 15.6 8.6 Q12 9.8 8 8.7 Q6.8 10 6.1 13Z" fill="#141414"/><path d="M7.6 12.2 H10.4 M13.2 12.2 H16" stroke="#4d3522" stroke-width="1.1"/></svg></div>
<div class="c " style="left:1044.60px;width:132.80px"><svg class="dots" width="72" height="10" viewBox="0 0 72 10"><circle cx="4.8" cy="5" r="4.8" fill="#e0251b"/><circle cx="19.8" cy="5" r="4.8" fill="#e0251b"/><circle cx="34.8" cy="5" r="4.8" fill="#e0251b"/><circle cx="49.8" cy="5" r="4.8" fill="#e0251b"/><circle cx="64.8" cy="5" r="4.8" fill="#d9d9d9"/></svg></div>
<div class="c " style="left:1176.40px;width:101.80px"><svg class="stars" width="72" height="12" viewBox="0 0 72 12"><path transform="translate(0.00,0)" d="M6 0.6 L7.6 4.2 L11.5 4.5 L8.5 7.1 L9.4 10.9 L6 8.9 L2.6 10.9 L3.5 7.1 L0.5 4.5 L4.4 4.2Z" fill="#ecc800"/><path transform="translate(14.96,0)" d="M6 0.6 L7.6 4.2 L11.5 4.5 L8.5 7.1 L9.4 10.9 L6 8.9 L2.6 10.9 L3.5 7.1 L0.5 4.5 L4.4 4.2Z" fill="#ecc800"/><path transform="translate(29.92,0)" d="M6 0.6 L7.6 4.2 L11.5 4.5 L8.5 7.1 L9.4 10.9 L6 8.9 L2.6 10.9 L3.5 7.1 L0.5 4.5 L4.4 4.2Z" fill="#ecc800"/><path transform="translate(44.88,0)" d="M6 0.6 L7.6 4.2 L11.5 4.5 L8.5 7.1 L9.4 10.9 L6 8.9 L2.6 10.9 L3.5 7.1 L0.5 4.5 L4.4 4.2Z" fill="#ecc800"/><path transform="translate(59.84,0)" d="M6 0.6 L7.6 4.2 L11.5 4.5 L8.5 7.1 L9.4 10.9 L6 8.9 L2.6 10.9 L3.5 7.1 L0.5 4.5 L4.4 4.2Z" fill="#dadada"/></svg></div>
<div class="c rl" style="left:1277.20px;width:91.00px">16</div>
<div class="c " style="left:1367.20px;width:157.80px"><span class="tp tm">Risk Modification</span></div>
</div>
<div class="row" style="top:709.78px">
<div class="c num" style="left:0.00px;width:34.00px">22</div>
<div class="c " style="left:33.00px;width:229.30px">Printer/Photocopier</div>
<div class="c " style="left:261.30px;width:251.40px"></div>
<div class="c " style="left:511.70px;width:199.70px">Lack of user authentication and</div>
<div class="c pc" style="left:710.40px;width:227.70px"><span class="pill cc">Confidentiality</span><span class="pill ca">Availability</span></div>
<div class="c " style="left:937.10px;width:108.50px"><svg class="av" width="25.5" height="25.5" viewBox="0 0 25 25"><circle cx="12.5" cy="12.5" r="12" fill="#fff" stroke="#e9e9e9" stroke-width="1"/><path d="M6.5 25 Q7 21.2 10 20.6 L15 20.6 Q18.6 21.2 19.5 25Z" fill="#dfe3f3"/><path d="M9.6 22.2 H14.2 V24.4 H9.6Z" fill="#41447e"/><ellipse cx="11.8" cy="13.6" rx="5.6" ry="7.6" fill="#ad825c"/><path d="M6.1 13 Q5.6 7.5 7.2 5.6 Q8.5 3.9 11.8 3.9 Q15.6 3.9 16.6 5.8 Q17.8 8 17.4 12.6 Q16.8 9.2 15.6 8.6 Q12 9.8 8 8.7 Q6.8 10 6.1 13Z" fill="#141414"/><path d="M7.6 12.2 H10.4 M13.2 12.2 H16" stroke="#4d3522" stroke-width="1.1"/></svg></div>
<div class="c " style="left:1044.60px;width:132.80px"><svg class="dots" width="72" height="10" viewBox="0 0 72 10"><circle cx="4.8" cy="5" r="4.8" fill="#e0251b"/><circle cx="19.8" cy="5" r="4.8" fill="#e0251b"/><circle cx="34.8" cy="5" r="4.8" fill="#e0251b"/><circle cx="49.8" cy="5" r="4.8" fill="#d9d9d9"/><circle cx="64.8" cy="5" r="4.8" fill="#d9d9d9"/></svg></div>
<div class="c " style="left:1176.40px;width:101.80px"><svg class="stars" width="72" height="12" viewBox="0 0 72 12"><path transform="translate(0.00,0)" d="M6 0.6 L7.6 4.2 L11.5 4.5 L8.5 7.1 L9.4 10.9 L6 8.9 L2.6 10.9 L3.5 7.1 L0.5 4.5 L4.4 4.2Z" fill="#ecc800"/><path transform="translate(14.96,0)" d="M6 0.6 L7.6 4.2 L11.5 4.5 L8.5 7.1 L9.4 10.9 L6 8.9 L2.6 10.9 L3.5 7.1 L0.5 4.5 L4.4 4.2Z" fill="#dadada"/><path transform="translate(29.92,0)" d="M6 0.6 L7.6 4.2 L11.5 4.5 L8.5 7.1 L9.4 10.9 L6 8.9 L2.6 10.9 L3.5 7.1 L0.5 4.5 L4.4 4.2Z" fill="#dadada"/><path transform="translate(44.88,0)" d="M6 0.6 L7.6 4.2 L11.5 4.5 L8.5 7.1 L9.4 10.9 L6 8.9 L2.6 10.9 L3.5 7.1 L0.5 4.5 L4.4 4.2Z" fill="#dadada"/><path transform="translate(59.84,0)" d="M6 0.6 L7.6 4.2 L11.5 4.5 L8.5 7.1 L9.4 10.9 L6 8.9 L2.6 10.9 L3.5 7.1 L0.5 4.5 L4.4 4.2Z" fill="#dadada"/></svg></div>
<div class="c rl" style="left:1277.20px;width:91.00px">3</div>
<div class="c " style="left:1367.20px;width:157.80px"><span class="tp tr">Risk Retention (Acceptan...</span></div>
</div>
<div class="row" style="top:742.06px">
<div class="c num" style="left:0.00px;width:34.00px">23</div>
<div class="c " style="left:33.00px;width:229.30px">Antivirus software</div>
<div class="c " style="left:261.30px;width:251.40px"></div>
<div class="c " style="left:511.70px;width:199.70px">Outdated antivirus software with</div>
<div class="c pc" style="left:710.40px;width:227.70px"><span class="pill ci">Integrity</span></div>
<div class="c " style="left:937.10px;width:108.50px"><svg class="av" width="25.5" height="25.5" viewBox="0 0 25 25"><circle cx="12.5" cy="12.5" r="12" fill="#fff" stroke="#e9e9e9" stroke-width="1"/><path d="M6.5 25 Q7 21.2 10 20.6 L15 20.6 Q18.6 21.2 19.5 25Z" fill="#dfe3f3"/><path d="M9.6 22.2 H14.2 V24.4 H9.6Z" fill="#41447e"/><ellipse cx="11.8" cy="13.6" rx="5.6" ry="7.6" fill="#ad825c"/><path d="M6.1 13 Q5.6 7.5 7.2 5.6 Q8.5 3.9 11.8 3.9 Q15.6 3.9 16.6 5.8 Q17.8 8 17.4 12.6 Q16.8 9.2 15.6 8.6 Q12 9.8 8 8.7 Q6.8 10 6.1 13Z" fill="#141414"/><path d="M7.6 12.2 H10.4 M13.2 12.2 H16" stroke="#4d3522" stroke-width="1.1"/></svg></div>
<div class="c " style="left:1044.60px;width:132.80px"><svg class="dots" width="72" height="10" viewBox="0 0 72 10"><circle cx="4.8" cy="5" r="4.8" fill="#e0251b"/><circle cx="19.8" cy="5" r="4.8" fill="#e0251b"/><circle cx="34.8" cy="5" r="4.8" fill="#e0251b"/><circle cx="49.8" cy="5" r="4.8" fill="#e0251b"/><circle cx="64.8" cy="5" r="4.8" fill="#d9d9d9"/></svg></div>
<div class="c " style="left:1176.40px;width:101.80px"><svg class="stars" width="72" height="12" viewBox="0 0 72 12"><path transform="translate(0.00,0)" d="M6 0.6 L7.6 4.2 L11.5 4.5 L8.5 7.1 L9.4 10.9 L6 8.9 L2.6 10.9 L3.5 7.1 L0.5 4.5 L4.4 4.2Z" fill="#ecc800"/><path transform="translate(14.96,0)" d="M6 0.6 L7.6 4.2 L11.5 4.5 L8.5 7.1 L9.4 10.9 L6 8.9 L2.6 10.9 L3.5 7.1 L0.5 4.5 L4.4 4.2Z" fill="#ecc800"/><path transform="translate(29.92,0)" d="M6 0.6 L7.6 4.2 L11.5 4.5 L8.5 7.1 L9.4 10.9 L6 8.9 L2.6 10.9 L3.5 7.1 L0.5 4.5 L4.4 4.2Z" fill="#ecc800"/><path transform="translate(44.88,0)" d="M6 0.6 L7.6 4.2 L11.5 4.5 L8.5 7.1 L9.4 10.9 L6 8.9 L2.6 10.9 L3.5 7.1 L0.5 4.5 L4.4 4.2Z" fill="#ecc800"/><path transform="translate(59.84,0)" d="M6 0.6 L7.6 4.2 L11.5 4.5 L8.5 7.1 L9.4 10.9 L6 8.9 L2.6 10.9 L3.5 7.1 L0.5 4.5 L4.4 4.2Z" fill="#dadada"/></svg></div>
<div class="c rl" style="left:1277.20px;width:91.00px">16</div>
<div class="c " style="left:1367.20px;width:157.80px"><span class="tp tm">Risk Modification</span></div>
</div>
<div class="row" style="top:774.34px">
<div class="c num" style="left:0.00px;width:34.00px">24</div>
<div class="c " style="left:33.00px;width:229.30px">Web Browser</div>
<div class="c " style="left:261.30px;width:251.40px"></div>
<div class="c " style="left:511.70px;width:199.70px">Lack of user awareness about phishing</div>
<div class="c pc" style="left:710.40px;width:227.70px"><span class="pill cc">Confidentiality</span><span class="pill ca">Availability</span></div>
<div class="c " style="left:937.10px;width:108.50px"><svg class="av" width="25.5" height="25.5" viewBox="0 0 25 25"><circle cx="12.5" cy="12.5" r="12" fill="#fff" stroke="#e9e9e9" stroke-width="1"/><path d="M6.5 25 Q7 21.2 10 20.6 L15 20.6 Q18.6 21.2 19.5 25Z" fill="#dfe3f3"/><path d="M9.6 22.2 H14.2 V24.4 H9.6Z" fill="#41447e"/><ellipse cx="11.8" cy="13.6" rx="5.6" ry="7.6" fill="#ad825c"/><path d="M6.1 13 Q5.6 7.5 7.2 5.6 Q8.5 3.9 11.8 3.9 Q15.6 3.9 16.6 5.8 Q17.8 8 17.4 12.6 Q16.8 9.2 15.6 8.6 Q12 9.8 8 8.7 Q6.8 10 6.1 13Z" fill="#141414"/><path d="M7.6 12.2 H10.4 M13.2 12.2 H16" stroke="#4d3522" stroke-width="1.1"/></svg></div>
<div class="c " style="left:1044.60px;width:132.80px"><svg class="dots" width="72" height="10" viewBox="0 0 72 10"><circle cx="4.8" cy="5" r="4.8" fill="#e0251b"/><circle cx="19.8" cy="5" r="4.8" fill="#e0251b"/><circle cx="34.8" cy="5" r="4.8" fill="#e0251b"/><circle cx="49.8" cy="5" r="4.8" fill="#e0251b"/><circle cx="64.8" cy="5" r="4.8" fill="#d9d9d9"/></svg></div>
<div class="c " style="left:1176.40px;width:101.80px"><svg class="stars" width="72" height="12" viewBox="0 0 72 12"><path transform="translate(0.00,0)" d="M6 0.6 L7.6 4.2 L11.5 4.5 L8.5 7.1 L9.4 10.9 L6 8.9 L2.6 10.9 L3.5 7.1 L0.5 4.5 L4.4 4.2Z" fill="#ecc800"/><path transform="translate(14.96,0)" d="M6 0.6 L7.6 4.2 L11.5 4.5 L8.5 7.1 L9.4 10.9 L6 8.9 L2.6 10.9 L3.5 7.1 L0.5 4.5 L4.4 4.2Z" fill="#ecc800"/><path transform="translate(29.92,0)" d="M6 0.6 L7.6 4.2 L11.5 4.5 L8.5 7.1 L9.4 10.9 L6 8.9 L2.6 10.9 L3.5 7.1 L0.5 4.5 L4.4 4.2Z" fill="#ecc800"/><path transform="translate(44.88,0)" d="M6 0.6 L7.6 4.2 L11.5 4.5 L8.5 7.1 L9.4 10.9 L6 8.9 L2.6 10.9 L3.5 7.1 L0.5 4.5 L4.4 4.2Z" fill="#dadada"/><path transform="translate(59.84,0)" d="M6 0.6 L7.6 4.2 L11.5 4.5 L8.5 7.1 L9.4 10.9 L6 8.9 L2.6 10.9 L3.5 7.1 L0.5 4.5 L4.4 4.2Z" fill="#dadada"/></svg></div>
<div class="c rl" style="left:1277.20px;width:91.00px">12</div>
<div class="c " style="left:1367.20px;width:157.80px"><span class="tp tm">Risk Modification</span></div>
</div>
<div class="row" style="top:806.62px">
<div class="c num" style="left:0.00px;width:34.00px">25</div>
<div class="c " style="left:33.00px;width:229.30px">Backup Data</div>
<div class="c " style="left:261.30px;width:251.40px"></div>
<div class="c " style="left:511.70px;width:199.70px">Inadequate access controls on backup</div>
<div class="c pc" style="left:710.40px;width:227.70px"><span class="pill cc">Confidentiality</span><span class="pill ca">Availability</span></div>
<div class="c " style="left:937.10px;width:108.50px"><svg class="av" width="25.5" height="25.5" viewBox="0 0 25 25"><circle cx="12.5" cy="12.5" r="12" fill="#fff" stroke="#e9e9e9" stroke-width="1"/><path d="M6.5 25 Q7 21.2 10 20.6 L15 20.6 Q18.6 21.2 19.5 25Z" fill="#dfe3f3"/><path d="M9.6 22.2 H14.2 V24.4 H9.6Z" fill="#41447e"/><ellipse cx="11.8" cy="13.6" rx="5.6" ry="7.6" fill="#ad825c"/><path d="M6.1 13 Q5.6 7.5 7.2 5.6 Q8.5 3.9 11.8 3.9 Q15.6 3.9 16.6 5.8 Q17.8 8 17.4 12.6 Q16.8 9.2 15.6 8.6 Q12 9.8 8 8.7 Q6.8 10 6.1 13Z" fill="#141414"/><path d="M7.6 12.2 H10.4 M13.2 12.2 H16" stroke="#4d3522" stroke-width="1.1"/></svg></div>
<div class="c " style="left:1044.60px;width:132.80px"><svg class="dots" width="72" height="10" viewBox="0 0 72 10"><circle cx="4.8" cy="5" r="4.8" fill="#e0251b"/><circle cx="19.8" cy="5" r="4.8" fill="#e0251b"/><circle cx="34.8" cy="5" r="4.8" fill="#e0251b"/><circle cx="49.8" cy="5" r="4.8" fill="#e0251b"/><circle cx="64.8" cy="5" r="4.8" fill="#d9d9d9"/></svg></div>
<div class="c " style="left:1176.40px;width:101.80px"><svg class="stars" width="72" height="12" viewBox="0 0 72 12"><path transform="translate(0.00,0)" d="M6 0.6 L7.6 4.2 L11.5 4.5 L8.5 7.1 L9.4 10.9 L6 8.9 L2.6 10.9 L3.5 7.1 L0.5 4.5 L4.4 4.2Z" fill="#ecc800"/><path transform="translate(14.96,0)" d="M6 0.6 L7.6 4.2 L11.5 4.5 L8.5 7.1 L9.4 10.9 L6 8.9 L2.6 10.9 L3.5 7.1 L0.5 4.5 L4.4 4.2Z" fill="#ecc800"/><path transform="translate(29.92,0)" d="M6 0.6 L7.6 4.2 L11.5 4.5 L8.5 7.1 L9.4 10.9 L6 8.9 L2.6 10.9 L3.5 7.1 L0.5 4.5 L4.4 4.2Z" fill="#ecc800"/><path transform="translate(44.88,0)" d="M6 0.6 L7.6 4.2 L11.5 4.5 L8.5 7.1 L9.4 10.9 L6 8.9 L2.6 10.9 L3.5 7.1 L0.5 4.5 L4.4 4.2Z" fill="#dadada"/><path transform="translate(59.84,0)" d="M6 0.6 L7.6 4.2 L11.5 4.5 L8.5 7.1 L9.4 10.9 L6 8.9 L2.6 10.9 L3.5 7.1 L0.5 4.5 L4.4 4.2Z" fill="#dadada"/></svg></div>
<div class="c rl" style="left:1277.20px;width:91.00px">12</div>
<div class="c " style="left:1367.20px;width:157.80px"><span class="tp tr">Risk Retention (Acceptan...</span></div>
</div>
<div class="row" style="top:838.90px">
<div class="c num" style="left:0.00px;width:34.00px">26</div>
<div class="c " style="left:33.00px;width:229.30px">Website Content</div>
<div class="c " style="left:261.30px;width:251.40px"></div>
<div class="c " style="left:511.70px;width:199.70px">Lack of access controls and audit</div>
<div class="c pc" style="left:710.40px;width:227.70px"><span class="pill cc">Confidentiality</span><span class="pill ci">Integrity</span><span class="pill ca">Availability</span></div>
<div class="c " style="left:937.10px;width:108.50px"><svg class="av" width="25.5" height="25.5" viewBox="0 0 25 25"><circle cx="12.5" cy="12.5" r="12" fill="#fff" stroke="#e9e9e9" stroke-width="1"/><path d="M6.5 25 Q7 21.2 10 20.6 L15 20.6 Q18.6 21.2 19.5 25Z" fill="#dfe3f3"/><path d="M9.6 22.2 H14.2 V24.4 H9.6Z" fill="#41447e"/><ellipse cx="11.8" cy="13.6" rx="5.6" ry="7.6" fill="#ad825c"/><path d="M6.1 13 Q5.6 7.5 7.2 5.6 Q8.5 3.9 11.8 3.9 Q15.6 3.9 16.6 5.8 Q17.8 8 17.4 12.6 Q16.8 9.2 15.6 8.6 Q12 9.8 8 8.7 Q6.8 10 6.1 13Z" fill="#141414"/><path d="M7.6 12.2 H10.4 M13.2 12.2 H16" stroke="#4d3522" stroke-width="1.1"/></svg></div>
<div class="c " style="left:1044.60px;width:132.80px"><svg class="dots" width="72" height="10" viewBox="0 0 72 10"><circle cx="4.8" cy="5" r="4.8" fill="#e0251b"/><circle cx="19.8" cy="5" r="4.8" fill="#e0251b"/><circle cx="34.8" cy="5" r="4.8" fill="#e0251b"/><circle cx="49.8" cy="5" r="4.8" fill="#e0251b"/><circle cx="64.8" cy="5" r="4.8" fill="#e0251b"/></svg></div>
<div class="c " style="left:1176.40px;width:101.80px"><svg class="stars" width="72" height="12" viewBox="0 0 72 12"><path transform="translate(0.00,0)" d="M6 0.6 L7.6 4.2 L11.5 4.5 L8.5 7.1 L9.4 10.9 L6 8.9 L2.6 10.9 L3.5 7.1 L0.5 4.5 L4.4 4.2Z" fill="#ecc800"/><path transform="translate(14.96,0)" d="M6 0.6 L7.6 4.2 L11.5 4.5 L8.5 7.1 L9.4 10.9 L6 8.9 L2.6 10.9 L3.5 7.1 L0.5 4.5 L4.4 4.2Z" fill="#ecc800"/><path transform="translate(29.92,0)" d="M6 0.6 L7.6 4.2 L11.5 4.5 L8.5 7.1 L9.4 10.9 L6 8.9 L2.6 10.9 L3.5 7.1 L0.5 4.5 L4.4 4.2Z" fill="#ecc800"/><path transform="translate(44.88,0)" d="M6 0.6 L7.6 4.2 L11.5 4.5 L8.5 7.1 L9.4 10.9 L6 8.9 L2.6 10.9 L3.5 7.1 L0.5 4.5 L4.4 4.2Z" fill="#ecc800"/><path transform="translate(59.84,0)" d="M6 0.6 L7.6 4.2 L11.5 4.5 L8.5 7.1 L9.4 10.9 L6 8.9 L2.6 10.9 L3.5 7.1 L0.5 4.5 L4.4 4.2Z" fill="#dadada"/></svg></div>
<div class="c rl" style="left:1277.20px;width:91.00px">20</div>
<div class="c " style="left:1367.20px;width:157.80px"><span class="tp tm">Risk Modification</span></div>
</div>
<div class="row" style="top:871.18px">
<div class="c num" style="left:0.00px;width:34.00px">27</div>
<div class="c " style="left:33.00px;width:229.30px">Source Codes</div>
<div class="c " style="left:261.30px;width:251.40px">Unauthorised access, modification, or theft</div>
<div class="c " style="left:511.70px;width:199.70px">Weak or compromised user credentials</div>
<div class="c pc" style="left:710.40px;width:227.70px"><span class="pill cc">Confidentiality</span><span class="pill ca">Availability</span></div>
<div class="c " style="left:937.10px;width:108.50px"><svg class="av" width="25.5" height="25.5" viewBox="0 0 25 25"><circle cx="12.5" cy="12.5" r="12" fill="#fff" stroke="#e9e9e9" stroke-width="1"/><path d="M6.5 25 Q7 21.2 10 20.6 L15 20.6 Q18.6 21.2 19.5 25Z" fill="#dfe3f3"/><path d="M9.6 22.2 H14.2 V24.4 H9.6Z" fill="#41447e"/><ellipse cx="11.8" cy="13.6" rx="5.6" ry="7.6" fill="#ad825c"/><path d="M6.1 13 Q5.6 7.5 7.2 5.6 Q8.5 3.9 11.8 3.9 Q15.6 3.9 16.6 5.8 Q17.8 8 17.4 12.6 Q16.8 9.2 15.6 8.6 Q12 9.8 8 8.7 Q6.8 10 6.1 13Z" fill="#141414"/><path d="M7.6 12.2 H10.4 M13.2 12.2 H16" stroke="#4d3522" stroke-width="1.1"/></svg></div>
<div class="c " style="left:1044.60px;width:132.80px"><svg class="dots" width="72" height="10" viewBox="0 0 72 10"><circle cx="4.8" cy="5" r="4.8" fill="#e0251b"/><circle cx="19.8" cy="5" r="4.8" fill="#e0251b"/><circle cx="34.8" cy="5" r="4.8" fill="#e0251b"/><circle cx="49.8" cy="5" r="4.8" fill="#e0251b"/><circle cx="64.8" cy="5" r="4.8" fill="#e0251b"/></svg></div>
<div class="c " style="left:1176.40px;width:101.80px"><svg class="stars" width="72" height="12" viewBox="0 0 72 12"><path transform="translate(0.00,0)" d="M6 0.6 L7.6 4.2 L11.5 4.5 L8.5 7.1 L9.4 10.9 L6 8.9 L2.6 10.9 L3.5 7.1 L0.5 4.5 L4.4 4.2Z" fill="#ecc800"/><path transform="translate(14.96,0)" d="M6 0.6 L7.6 4.2 L11.5 4.5 L8.5 7.1 L9.4 10.9 L6 8.9 L2.6 10.9 L3.5 7.1 L0.5 4.5 L4.4 4.2Z" fill="#ecc800"/><path transform="translate(29.92,0)" d="M6 0.6 L7.6 4.2 L11.5 4.5 L8.5 7.1 L9.4 10.9 L6 8.9 L2.6 10.9 L3.5 7.1 L0.5 4.5 L4.4 4.2Z" fill="#ecc800"/><path transform="translate(44.88,0)" d="M6 0.6 L7.6 4.2 L11.5 4.5 L8.5 7.1 L9.4 10.9 L6 8.9 L2.6 10.9 L3.5 7.1 L0.5 4.5 L4.4 4.2Z" fill="#ecc800"/><path transform="translate(59.84,0)" d="M6 0.6 L7.6 4.2 L11.5 4.5 L8.5 7.1 L9.4 10.9 L6 8.9 L2.6 10.9 L3.5 7.1 L0.5 4.5 L4.4 4.2Z" fill="#dadada"/></svg></div>
<div class="c rl" style="left:1277.20px;width:91.00px">20</div>
<div class="c " style="left:1367.20px;width:157.80px"><span class="tp tm">Risk Modification</span></div>
</div>
<div class="row" style="top:903.46px">
<div class="c num" style="left:0.00px;width:34.00px">28</div>
<div class="c " style="left:33.00px;width:229.30px">Slack collaboration software</div>
<div class="c " style="left:261.30px;width:251.40px">Unauthorised access, data leakage, or compromise</div>
<div class="c " style="left:511.70px;width:199.70px">Insufficient controls on file sharing</div>
<div class="c pc" style="left:710.40px;width:227.70px"><span class="pill cc">Confidentiality</span></div>
<div class="c " style="left:937.10px;width:108.50px"><svg class="av" width="25.5" height="25.5" viewBox="0 0 25 25"><circle cx="12.5" cy="12.5" r="12" fill="#fff" stroke="#e9e9e9" stroke-width="1"/><path d="M6.5 25 Q7 21.2 10 20.6 L15 20.6 Q18.6 21.2 19.5 25Z" fill="#dfe3f3"/><path d="M9.6 22.2 H14.2 V24.4 H9.6Z" fill="#41447e"/><ellipse cx="11.8" cy="13.6" rx="5.6" ry="7.6" fill="#ad825c"/><path d="M6.1 13 Q5.6 7.5 7.2 5.6 Q8.5 3.9 11.8 3.9 Q15.6 3.9 16.6 5.8 Q17.8 8 17.4 12.6 Q16.8 9.2 15.6 8.6 Q12 9.8 8 8.7 Q6.8 10 6.1 13Z" fill="#141414"/><path d="M7.6 12.2 H10.4 M13.2 12.2 H16" stroke="#4d3522" stroke-width="1.1"/></svg></div>
<div class="c " style="left:1044.60px;width:132.80px"><svg class="dots" width="72" height="10" viewBox="0 0 72 10"><circle cx="4.8" cy="5" r="4.8" fill="#e0251b"/><circle cx="19.8" cy="5" r="4.8" fill="#e0251b"/><circle cx="34.8" cy="5" r="4.8" fill="#e0251b"/><circle cx="49.8" cy="5" r="4.8" fill="#d9d9d9"/><circle cx="64.8" cy="5" r="4.8" fill="#d9d9d9"/></svg></div>
<div class="c " style="left:1176.40px;width:101.80px"><svg class="stars" width="72" height="12" viewBox="0 0 72 12"><path transform="translate(0.00,0)" d="M6 0.6 L7.6 4.2 L11.5 4.5 L8.5 7.1 L9.4 10.9 L6 8.9 L2.6 10.9 L3.5 7.1 L0.5 4.5 L4.4 4.2Z" fill="#ecc800"/><path transform="translate(14.96,0)" d="M6 0.6 L7.6 4.2 L11.5 4.5 L8.5 7.1 L9.4 10.9 L6 8.9 L2.6 10.9 L3.5 7.1 L0.5 4.5 L4.4 4.2Z" fill="#dadada"/><path transform="translate(29.92,0)" d="M6 0.6 L7.6 4.2 L11.5 4.5 L8.5 7.1 L9.4 10.9 L6 8.9 L2.6 10.9 L3.5 7.1 L0.5 4.5 L4.4 4.2Z" fill="#dadada"/><path transform="translate(44.88,0)" d="M6 0.6 L7.6 4.2 L11.5 4.5 L8.5 7.1 L9.4 10.9 L6 8.9 L2.6 10.9 L3.5 7.1 L0.5 4.5 L4.4 4.2Z" fill="#dadada"/><path transform="translate(59.84,0)" d="M6 0.6 L7.6 4.2 L11.5 4.5 L8.5 7.1 L9.4 10.9 L6 8.9 L2.6 10.9 L3.5 7.1 L0.5 4.5 L4.4 4.2Z" fill="#dadada"/></svg></div>
<div class="c rl" style="left:1277.20px;width:91.00px">3</div>
<div class="c " style="left:1367.20px;width:157.80px"><span class="tp tr">Risk Retention (Acceptan...</span></div>
</div>
<div class="row" style="top:935.74px">
<div class="c num" style="left:0.00px;width:34.00px">29</div>
<div class="c " style="left:33.00px;width:229.30px">Courier services</div>
<div class="c " style="left:261.30px;width:251.40px">Unauthorised access, tampering, loss, or theft</div>
<div class="c " style="left:511.70px;width:199.70px">Lack of secure packaging and tracking</div>
<div class="c pc" style="left:710.40px;width:227.70px"><span class="pill cc">Confidentiality</span><span class="pill ca">Availability</span></div>
<div class="c " style="left:937.10px;width:108.50px"><svg class="av" width="25.5" height="25.5" viewBox="0 0 25 25"><circle cx="12.5" cy="12.5" r="12" fill="#fff" stroke="#e9e9e9" stroke-width="1"/><path d="M6.5 25 Q7 21.2 10 20.6 L15 20.6 Q18.6 21.2 19.5 25Z" fill="#dfe3f3"/><path d="M9.6 22.2 H14.2 V24.4 H9.6Z" fill="#41447e"/><ellipse cx="11.8" cy="13.6" rx="5.6" ry="7.6" fill="#ad825c"/><path d="M6.1 13 Q5.6 7.5 7.2 5.6 Q8.5 3.9 11.8 3.9 Q15.6 3.9 16.6 5.8 Q17.8 8 17.4 12.6 Q16.8 9.2 15.6 8.6 Q12 9.8 8 8.7 Q6.8 10 6.1 13Z" fill="#141414"/><path d="M7.6 12.2 H10.4 M13.2 12.2 H16" stroke="#4d3522" stroke-width="1.1"/></svg></div>
<div class="c " style="left:1044.60px;width:132.80px"><svg class="dots" width="72" height="10" viewBox="0 0 72 10"><circle cx="4.8" cy="5" r="4.8" fill="#e0251b"/><circle cx="19.8" cy="5" r="4.8" fill="#e0251b"/><circle cx="34.8" cy="5" r="4.8" fill="#e0251b"/><circle cx="49.8" cy="5" r="4.8" fill="#e0251b"/><circle cx="64.8" cy="5" r="4.8" fill="#d9d9d9"/></svg></div>
<div class="c " style="left:1176.40px;width:101.80px"><svg class="stars" width="72" height="12" viewBox="0 0 72 12"><path transform="translate(0.00,0)" d="M6 0.6 L7.6 4.2 L11.5 4.5 L8.5 7.1 L9.4 10.9 L6 8.9 L2.6 10.9 L3.5 7.1 L0.5 4.5 L4.4 4.2Z" fill="#ecc800"/><path transform="translate(14.96,0)" d="M6 0.6 L7.6 4.2 L11.5 4.5 L8.5 7.1 L9.4 10.9 L6 8.9 L2.6 10.9 L3.5 7.1 L0.5 4.5 L4.4 4.2Z" fill="#dadada"/><path transform="translate(29.92,0)" d="M6 0.6 L7.6 4.2 L11.5 4.5 L8.5 7.1 L9.4 10.9 L6 8.9 L2.6 10.9 L3.5 7.1 L0.5 4.5 L4.4 4.2Z" fill="#dadada"/><path transform="translate(44.88,0)" d="M6 0.6 L7.6 4.2 L11.5 4.5 L8.5 7.1 L9.4 10.9 L6 8.9 L2.6 10.9 L3.5 7.1 L0.5 4.5 L4.4 4.2Z" fill="#dadada"/><path transform="translate(59.84,0)" d="M6 0.6 L7.6 4.2 L11.5 4.5 L8.5 7.1 L9.4 10.9 L6 8.9 L2.6 10.9 L3.5 7.1 L0.5 4.5 L4.4 4.2Z" fill="#dadada"/></svg></div>
<div class="c rl" style="left:1277.20px;width:91.00px">4</div>
<div class="c " style="left:1367.20px;width:157.80px"><span class="tp tr">Risk Retention (Acceptan...</span></div>
</div>
<div class="row" style="top:968.02px">
<div class="c num" style="left:0.00px;width:34.00px">30</div>
<div class="c " style="left:33.00px;width:229.30px">CCTV cameras</div>
<div class="c " style="left:261.30px;width:251.40px">Unauthorised access, tampering, or misuse</div>
<div class="c " style="left:511.70px;width:199.70px">Insufficient access controls and</div>
<div class="c pc" style="left:710.40px;width:227.70px"><span class="pill cc">Confidentiality</span><span class="pill ci">Integrity</span></div>
<div class="c " style="left:937.10px;width:108.50px"><svg class="av" width="25.5" height="25.5" viewBox="0 0 25 25"><circle cx="12.5" cy="12.5" r="12" fill="#fff" stroke="#e9e9e9" stroke-width="1"/><path d="M6.5 25 Q7 21.2 10 20.6 L15 20.6 Q18.6 21.2 19.5 25Z" fill="#dfe3f3"/><path d="M9.6 22.2 H14.2 V24.4 H9.6Z" fill="#41447e"/><ellipse cx="11.8" cy="13.6" rx="5.6" ry="7.6" fill="#ad825c"/><path d="M6.1 13 Q5.6 7.5 7.2 5.6 Q8.5 3.9 11.8 3.9 Q15.6 3.9 16.6 5.8 Q17.8 8 17.4 12.6 Q16.8 9.2 15.6 8.6 Q12 9.8 8 8.7 Q6.8 10 6.1 13Z" fill="#141414"/><path d="M7.6 12.2 H10.4 M13.2 12.2 H16" stroke="#4d3522" stroke-width="1.1"/></svg></div>
<div class="c " style="left:1044.60px;width:132.80px"><svg class="dots" width="72" height="10" viewBox="0 0 72 10"><circle cx="4.8" cy="5" r="4.8" fill="#e0251b"/><circle cx="19.8" cy="5" r="4.8" fill="#e0251b"/><circle cx="34.8" cy="5" r="4.8" fill="#e0251b"/><circle cx="49.8" cy="5" r="4.8" fill="#d9d9d9"/><circle cx="64.8" cy="5" r="4.8" fill="#d9d9d9"/></svg></div>
<div class="c " style="left:1176.40px;width:101.80px"><svg class="stars" width="72" height="12" viewBox="0 0 72 12"><path transform="translate(0.00,0)" d="M6 0.6 L7.6 4.2 L11.5 4.5 L8.5 7.1 L9.4 10.9 L6 8.9 L2.6 10.9 L3.5 7.1 L0.5 4.5 L4.4 4.2Z" fill="#ecc800"/><path transform="translate(14.96,0)" d="M6 0.6 L7.6 4.2 L11.5 4.5 L8.5 7.1 L9.4 10.9 L6 8.9 L2.6 10.9 L3.5 7.1 L0.5 4.5 L4.4 4.2Z" fill="#ecc800"/><path transform="translate(29.92,0)" d="M6 0.6 L7.6 4.2 L11.5 4.5 L8.5 7.1 L9.4 10.9 L6 8.9 L2.6 10.9 L3.5 7.1 L0.5 4.5 L4.4 4.2Z" fill="#ecc800"/><path transform="translate(44.88,0)" d="M6 0.6 L7.6 4.2 L11.5 4.5 L8.5 7.1 L9.4 10.9 L6 8.9 L2.6 10.9 L3.5 7.1 L0.5 4.5 L4.4 4.2Z" fill="#dadada"/><path transform="translate(59.84,0)" d="M6 0.6 L7.6 4.2 L11.5 4.5 L8.5 7.1 L9.4 10.9 L6 8.9 L2.6 10.9 L3.5 7.1 L0.5 4.5 L4.4 4.2Z" fill="#dadada"/></svg></div>
<div class="c rl" style="left:1277.20px;width:91.00px">9</div>
<div class="c " style="left:1367.20px;width:157.80px"><span class="tp tr">Risk Retention (Acceptan...</span></div>
</div>
<div class="row" style="top:1000.30px">
<div class="c num" style="left:0.00px;width:34.00px">31</div>
<div class="c " style="left:33.00px;width:229.30px">Intellectual Property</div>
<div class="c " style="left:261.30px;width:251.40px">Unauthorised access, theft, or compromise</div>
<div class="c " style="left:511.70px;width:199.70px">Lack of employee awareness regarding</div>
<div class="c pc" style="left:710.40px;width:227.70px"><span class="pill ci">Integrity</span></div>
<div class="c " style="left:937.10px;width:108.50px"><svg class="av" width="25.5" height="25.5" viewBox="0 0 25 25"><circle cx="12.5" cy="12.5" r="12" fill="#fff" stroke="#e9e9e9" stroke-width="1"/><path d="M6.5 25 Q7 21.2 10 20.6 L15 20.6 Q18.6 21.2 19.5 25Z" fill="#dfe3f3"/><path d="M9.6 22.2 H14.2 V24.4 H9.6Z" fill="#41447e"/><ellipse cx="11.8" cy="13.6" rx="5.6" ry="7.6" fill="#ad825c"/><path d="M6.1 13 Q5.6 7.5 7.2 5.6 Q8.5 3.9 11.8 3.9 Q15.6 3.9 16.6 5.8 Q17.8 8 17.4 12.6 Q16.8 9.2 15.6 8.6 Q12 9.8 8 8.7 Q6.8 10 6.1 13Z" fill="#141414"/><path d="M7.6 12.2 H10.4 M13.2 12.2 H16" stroke="#4d3522" stroke-width="1.1"/></svg></div>
<div class="c " style="left:1044.60px;width:132.80px"><svg class="dots" width="72" height="10" viewBox="0 0 72 10"><circle cx="4.8" cy="5" r="4.8" fill="#e0251b"/><circle cx="19.8" cy="5" r="4.8" fill="#e0251b"/><circle cx="34.8" cy="5" r="4.8" fill="#e0251b"/><circle cx="49.8" cy="5" r="4.8" fill="#e0251b"/><circle cx="64.8" cy="5" r="4.8" fill="#d9d9d9"/></svg></div>
<div class="c " style="left:1176.40px;width:101.80px"><svg class="stars" width="72" height="12" viewBox="0 0 72 12"><path transform="translate(0.00,0)" d="M6 0.6 L7.6 4.2 L11.5 4.5 L8.5 7.1 L9.4 10.9 L6 8.9 L2.6 10.9 L3.5 7.1 L0.5 4.5 L4.4 4.2Z" fill="#ecc800"/><path transform="translate(14.96,0)" d="M6 0.6 L7.6 4.2 L11.5 4.5 L8.5 7.1 L9.4 10.9 L6 8.9 L2.6 10.9 L3.5 7.1 L0.5 4.5 L4.4 4.2Z" fill="#ecc800"/><path transform="translate(29.92,0)" d="M6 0.6 L7.6 4.2 L11.5 4.5 L8.5 7.1 L9.4 10.9 L6 8.9 L2.6 10.9 L3.5 7.1 L0.5 4.5 L4.4 4.2Z" fill="#ecc800"/><path transform="translate(44.88,0)" d="M6 0.6 L7.6 4.2 L11.5 4.5 L8.5 7.1 L9.4 10.9 L6 8.9 L2.6 10.9 L3.5 7.1 L0.5 4.5 L4.4 4.2Z" fill="#ecc800"/><path transform="translate(59.84,0)" d="M6 0.6 L7.6 4.2 L11.5 4.5 L8.5 7.1 L9.4 10.9 L6 8.9 L2.6 10.9 L3.5 7.1 L0.5 4.5 L4.4 4.2Z" fill="#dadada"/></svg></div>
<div class="c rl" style="left:1277.20px;width:91.00px">16</div>
<div class="c " style="left:1367.20px;width:157.80px"><span class="tp tm">Risk Modification</span></div>
</div>
<div class="row" style="top:1032.58px">
<div class="c num" style="left:0.00px;width:34.00px">32</div>
<div class="c " style="left:33.00px;width:229.30px">Personally Identifiable Information</div>
<div class="c " style="left:261.30px;width:251.40px">Unauthorised access, disclosure, or misuse</div>
<div class="c " style="left:511.70px;width:199.70px">Weak access controls and inadequate</div>
<div class="c pc" style="left:710.40px;width:227.70px"><span class="pill cc">Confidentiality</span><span class="pill ca">Availability</span></div>
<div class="c " style="left:937.10px;width:108.50px"><svg class="av" width="25.5" height="25.5" viewBox="0 0 25 25"><circle cx="12.5" cy="12.5" r="12" fill="#fff" stroke="#e9e9e9" stroke-width="1"/><path d="M6.5 25 Q7 21.2 10 20.6 L15 20.6 Q18.6 21.2 19.5 25Z" fill="#dfe3f3"/><path d="M9.6 22.2 H14.2 V24.4 H9.6Z" fill="#41447e"/><ellipse cx="11.8" cy="13.6" rx="5.6" ry="7.6" fill="#ad825c"/><path d="M6.1 13 Q5.6 7.5 7.2 5.6 Q8.5 3.9 11.8 3.9 Q15.6 3.9 16.6 5.8 Q17.8 8 17.4 12.6 Q16.8 9.2 15.6 8.6 Q12 9.8 8 8.7 Q6.8 10 6.1 13Z" fill="#141414"/><path d="M7.6 12.2 H10.4 M13.2 12.2 H16" stroke="#4d3522" stroke-width="1.1"/></svg></div>
<div class="c " style="left:1044.60px;width:132.80px"><svg class="dots" width="72" height="10" viewBox="0 0 72 10"><circle cx="4.8" cy="5" r="4.8" fill="#e0251b"/><circle cx="19.8" cy="5" r="4.8" fill="#e0251b"/><circle cx="34.8" cy="5" r="4.8" fill="#e0251b"/><circle cx="49.8" cy="5" r="4.8" fill="#e0251b"/><circle cx="64.8" cy="5" r="4.8" fill="#e0251b"/></svg></div>
<div class="c " style="left:1176.40px;width:101.80px"><svg class="stars" width="72" height="12" viewBox="0 0 72 12"><path transform="translate(0.00,0)" d="M6 0.6 L7.6 4.2 L11.5 4.5 L8.5 7.1 L9.4 10.9 L6 8.9 L2.6 10.9 L3.5 7.1 L0.5 4.5 L4.4 4.2Z" fill="#ecc800"/><path transform="translate(14.96,0)" d="M6 0.6 L7.6 4.2 L11.5 4.5 L8.5 7.1 L9.4 10.9 L6 8.9 L2.6 10.9 L3.5 7.1 L0.5 4.5 L4.4 4.2Z" fill="#ecc800"/><path transform="translate(29.92,0)" d="M6 0.6 L7.6 4.2 L11.5 4.5 L8.5 7.1 L9.4 10.9 L6 8.9 L2.6 10.9 L3.5 7.1 L0.5 4.5 L4.4 4.2Z" fill="#ecc800"/><path transform="translate(44.88,0)" d="M6 0.6 L7.6 4.2 L11.5 4.5 L8.5 7.1 L9.4 10.9 L6 8.9 L2.6 10.9 L3.5 7.1 L0.5 4.5 L4.4 4.2Z" fill="#ecc800"/><path transform="translate(59.84,0)" d="M6 0.6 L7.6 4.2 L11.5 4.5 L8.5 7.1 L9.4 10.9 L6 8.9 L2.6 10.9 L3.5 7.1 L0.5 4.5 L4.4 4.2Z" fill="#dadada"/></svg></div>
<div class="c rl" style="left:1277.20px;width:91.00px">20</div>
<div class="c " style="left:1367.20px;width:157.80px"><span class="tp tm">Risk Modification</span></div>
</div>
<div class="row" style="top:1064.86px">
<div class="c num" style="left:0.00px;width:34.00px">33</div>
<div class="c " style="left:33.00px;width:229.30px"></div>
<div class="c " style="left:261.30px;width:251.40px"></div>
<div class="c " style="left:511.70px;width:199.70px"></div>
<div class="c pc" style="left:710.40px;width:227.70px"></div>
<div class="c " style="left:937.10px;width:108.50px"></div>
<div class="c " style="left:1044.60px;width:132.80px"><svg class="dots" width="72" height="10" viewBox="0 0 72 10"><circle cx="4.8" cy="5" r="4.8" fill="#d9d9d9"/><circle cx="19.8" cy="5" r="4.8" fill="#d9d9d9"/><circle cx="34.8" cy="5" r="4.8" fill="#d9d9d9"/><circle cx="49.8" cy="5" r="4.8" fill="#d9d9d9"/><circle cx="64.8" cy="5" r="4.8" fill="#d9d9d9"/></svg></div>
<div class="c " style="left:1176.40px;width:101.80px"><svg class="stars" width="72" height="12" viewBox="0 0 72 12"><path transform="translate(0.00,0)" d="M6 0.6 L7.6 4.2 L11.5 4.5 L8.5 7.1 L9.4 10.9 L6 8.9 L2.6 10.9 L3.5 7.1 L0.5 4.5 L4.4 4.2Z" fill="#dadada"/><path transform="translate(14.96,0)" d="M6 0.6 L7.6 4.2 L11.5 4.5 L8.5 7.1 L9.4 10.9 L6 8.9 L2.6 10.9 L3.5 7.1 L0.5 4.5 L4.4 4.2Z" fill="#dadada"/><path transform="translate(29.92,0)" d="M6 0.6 L7.6 4.2 L11.5 4.5 L8.5 7.1 L9.4 10.9 L6 8.9 L2.6 10.9 L3.5 7.1 L0.5 4.5 L4.4 4.2Z" fill="#dadada"/><path transform="translate(44.88,0)" d="M6 0.6 L7.6 4.2 L11.5 4.5 L8.5 7.1 L9.4 10.9 L6 8.9 L2.6 10.9 L3.5 7.1 L0.5 4.5 L4.4 4.2Z" fill="#dadada"/><path transform="translate(59.84,0)" d="M6 0.6 L7.6 4.2 L11.5 4.5 L8.5 7.1 L9.4 10.9 L6 8.9 L2.6 10.9 L3.5 7.1 L0.5 4.5 L4.4 4.2Z" fill="#dadada"/></svg></div>
<div class="c rl" style="left:1277.20px;width:91.00px">0</div>
<div class="c " style="left:1367.20px;width:157.80px"></div>
</div>
<div class="abs" style="left:11px;top:1104px;font-size:13px;color:#7db3f7;white-space:nowrap"><svg style="position:absolute;left:0;top:4px" width="9" height="9" viewBox="0 0 9 9"><path d="M4.5 0.5 V8.5 M0.5 4.5 H8.5" stroke="#7db3f7" stroke-width="1.2"/></svg><span style="position:absolute;left:19px">Add new row</span></div>
</div>
<div id="pop">
<div class="plab" style="top:12px">Choose a row height</div>
<div class="pbox" style="top:29.8px;height:29.7px;line-height:28px">Small<svg class="abs" style="left:232px;top:10px" width="11" height="8" viewBox="0 0 11 8" fill="none" stroke="#4a4a4a" stroke-width="1.5"><path d="M1 1.5 L5.5 6 L10 1.5"/></svg></div>
<div class="plab" style="top:73.5px">Customize attributes</div>
<div class="pbox" style="top:91.8px;height:28.7px;line-height:27px">Search Attributes</div>
<div class="attr" style="top:140.50px;"><svg class="drag" width="7" height="11" viewBox="0 0 7 11"><g fill="#7c7ca6"><rect x="0.3" y="0.3" width="2.2" height="1.3"/><rect x="3.8" y="0.3" width="2.2" height="1.3"/><rect x="0.3" y="4.8" width="2.2" height="1.3" opacity="0.6"/><rect x="3.8" y="4.8" width="2.2" height="1.3" opacity="0.6"/><rect x="0.3" y="9.3" width="2.2" height="1.3"/><rect x="3.8" y="9.3" width="2.2" height="1.3"/></g></svg><span class="ai" style=""><svg width="11" height="11" viewBox="0 0 12 12" fill="none" stroke="currentColor" stroke-width="1"><path d="M2.5 8.5 L8.3 2.7 Q9.1 2 9.8 2.7 Q10.5 3.4 9.8 4.2 L4 10 L2.2 10.3Z"/><path d="M1.5 11.5 H10.5"/></svg></span><span class="at">Asset/Assets Group</span><div class="tog"></div></div>
<div class="attr" style="top:177.22px;"><svg class="drag" width="7" height="11" viewBox="0 0 7 11"><g fill="#7c7ca6"><rect x="0.3" y="0.3" width="2.2" height="1.3"/><rect x="3.8" y="0.3" width="2.2" height="1.3"/><rect x="0.3" y="4.8" width="2.2" height="1.3" opacity="0.6"/><rect x="3.8" y="4.8" width="2.2" height="1.3" opacity="0.6"/><rect x="0.3" y="9.3" width="2.2" height="1.3"/><rect x="3.8" y="9.3" width="2.2" height="1.3"/></g></svg><span class="ai" style=""><svg width="11" height="11" viewBox="0 0 12 12" fill="none" stroke="currentColor" stroke-width="1"><path d="M2.2 8.5 L7.3 3.2 Q8 2.5 8.7 3.2 Q9.4 3.9 8.7 4.6 L3.6 9.8 L1.9 10Z"/><path d="M1 11.5 H11 M8 9.2 H11"/></svg></span><span class="at">Threat</span><div class="tog"></div></div>
<div class="attr" style="top:213.94px;"><svg class="drag" width="7" height="11" viewBox="0 0 7 11"><g fill="#7c7ca6"><rect x="0.3" y="0.3" width="2.2" height="1.3"/><rect x="3.8" y="0.3" width="2.2" height="1.3"/><rect x="0.3" y="4.8" width="2.2" height="1.3" opacity="0.6"/><rect x="3.8" y="4.8" width="2.2" height="1.3" opacity="0.6"/><rect x="0.3" y="9.3" width="2.2" height="1.3"/><rect x="3.8" y="9.3" width="2.2" height="1.3"/></g></svg><span class="ai" style=""><svg width="11" height="11" viewBox="0 0 12 12" fill="none" stroke="currentColor" stroke-width="1"><path d="M2.2 8.5 L7.3 3.2 Q8 2.5 8.7 3.2 Q9.4 3.9 8.7 4.6 L3.6 9.8 L1.9 10Z"/><path d="M1 11.5 H11 M8 9.2 H11"/></svg></span><span class="at">Vulnerability</span><div class="tog"></div></div>
<div class="attr" style="top:250.66px;"><svg class="drag" width="7" height="11" viewBox="0 0 7 11"><g fill="#7c7ca6"><rect x="0.3" y="0.3" width="2.2" height="1.3"/><rect x="3.8" y="0.3" width="2.2" height="1.3"/><rect x="0.3" y="4.8" width="2.2" height="1.3" opacity="0.6"/><rect x="3.8" y="4.8" width="2.2" height="1.3" opacity="0.6"/><rect x="0.3" y="9.3" width="2.2" height="1.3"/><rect x="3.8" y="9.3" width="2.2" height="1.3"/></g></svg><span class="ai" style=""><svg width="12" height="12" viewBox="0 0 12 12" fill="none" stroke="currentColor" stroke-width="1"><path d="M1 1.5 V5.5 L6.5 11 L11 6.5 L5.5 1 H1.5Z"/><circle cx="3.6" cy="3.6" r="0.6" fill="currentColor"/></svg></span><span class="at">Risk Category</span><div class="tog"></div></div>
<div class="attr" style="top:287.38px;"><svg class="drag" width="7" height="11" viewBox="0 0 7 11"><g fill="#7c7ca6"><rect x="0.3" y="0.3" width="2.2" height="1.3"/><rect x="3.8" y="0.3" width="2.2" height="1.3"/><rect x="0.3" y="4.8" width="2.2" height="1.3" opacity="0.6"/><rect x="3.8" y="4.8" width="2.2" height="1.3" opacity="0.6"/><rect x="0.3" y="9.3" width="2.2" height="1.3"/><rect x="3.8" y="9.3" width="2.2" height="1.3"/></g></svg><span class="ai" style=""><svg width="12" height="12" viewBox="0 0 12 12" fill="none" stroke="currentColor" stroke-width="1"><circle cx="5" cy="3.5" r="2.3"/><path d="M1 11.2 Q1 7 5 7 Q9 7 9 11.2"/><path d="M7.8 1.3 Q9.6 1.6 9.5 3.5 Q9.4 5.3 7.8 5.6 M9.6 7.2 Q11.2 8 11.2 11"/></svg></span><span class="at">Risk Owner</span><div class="tog"></div><svg class="keb" viewBox="0 0 3 14"><circle cx="1.5" cy="2" r="1.1" fill="#555"/><circle cx="1.5" cy="6.5" r="1.1" fill="#555"/><circle cx="1.5" cy="11" r="1.1" fill="#555"/></svg></div>
<div class="attr" style="top:324.10px;"><svg class="drag" width="7" height="11" viewBox="0 0 7 11"><g fill="#7c7ca6"><rect x="0.3" y="0.3" width="2.2" height="1.3"/><rect x="3.8" y="0.3" width="2.2" height="1.3"/><rect x="0.3" y="4.8" width="2.2" height="1.3" opacity="0.6"/><rect x="3.8" y="4.8" width="2.2" height="1.3" opacity="0.6"/><rect x="0.3" y="9.3" width="2.2" height="1.3"/><rect x="3.8" y="9.3" width="2.2" height="1.3"/></g></svg><span class="ai" style=""><svg width="12" height="12" viewBox="0 0 12 12" fill="none" stroke="currentColor" stroke-width="1"><path d="M6 1 L7.5 4.3 L11 4.6 L8.4 6.9 L9.2 10.6 L6 8.8 L2.8 10.6 L3.6 6.9 L1 4.6 L4.5 4.3Z" stroke-linejoin="round"/></svg></span><span class="at"><svg style="position:relative;top:1.5px;margin-left:1.5px;margin-right:3px" width="13" height="13" viewBox="0 0 13 13"><circle cx="6.5" cy="6.5" r="6.2" fill="#e0342a"/></svg>Consequence</span><div class="tog"></div></div>
<div class="attr" style="top:360.82px;"><svg class="drag" width="7" height="11" viewBox="0 0 7 11"><g fill="#7c7ca6"><rect x="0.3" y="0.3" width="2.2" height="1.3"/><rect x="3.8" y="0.3" width="2.2" height="1.3"/><rect x="0.3" y="4.8" width="2.2" height="1.3" opacity="0.6"/><rect x="3.8" y="4.8" width="2.2" height="1.3" opacity="0.6"/><rect x="0.3" y="9.3" width="2.2" height="1.3"/><rect x="3.8" y="9.3" width="2.2" height="1.3"/></g></svg><span class="ai" style=""><svg width="12" height="12" viewBox="0 0 12 12" fill="none" stroke="currentColor" stroke-width="1"><path d="M6 1 L7.5 4.3 L11 4.6 L8.4 6.9 L9.2 10.6 L6 8.8 L2.8 10.6 L3.6 6.9 L1 4.6 L4.5 4.3Z" stroke-linejoin="round"/></svg></span><span class="at"><svg style="position:relative;top:1.5px;margin-left:1.5px;margin-right:2px" width="13" height="13" viewBox="0 0 12 12"><path d="M6 0.5 L7.6 4.2 L11.6 4.5 L8.6 7.1 L9.5 11.2 L6 9.1 L2.5 11.2 L3.4 7.1 L0.4 4.5 L4.4 4.2Z" fill="#f5d800"/></svg>Likelihood</span><div class="tog"></div></div>
<div class="attr" style="top:397.54px;"><svg class="drag" width="7" height="11" viewBox="0 0 7 11"><g fill="#7c7ca6"><rect x="0.3" y="0.3" width="2.2" height="1.3"/><rect x="3.8" y="0.3" width="2.2" height="1.3"/><rect x="0.3" y="4.8" width="2.2" height="1.3" opacity="0.6"/><rect x="3.8" y="4.8" width="2.2" height="1.3" opacity="0.6"/><rect x="0.3" y="9.3" width="2.2" height="1.3"/><rect x="3.8" y="9.3" width="2.2" height="1.3"/></g></svg><span class="ai" style=""><svg width="13" height="12" viewBox="0 0 13 12" fill="none" stroke="currentColor" stroke-width="1"><path d="M6.5 1.2 Q5 0.8 4.6 2.6 L3.2 9.5 Q2.8 11.2 1.2 10.8 M2.6 4.5 H6.4"/><path d="M7.6 6.5 L11.6 10.8 M11.6 6.5 L7.6 10.8" stroke-width="0.9"/></svg></span><span class="at">Risk Level</span><div class="tog"></div></div>
<div class="attr" style="top:434.26px;"><svg class="drag" width="7" height="11" viewBox="0 0 7 11"><g fill="#7c7ca6"><rect x="0.3" y="0.3" width="2.2" height="1.3"/><rect x="3.8" y="0.3" width="2.2" height="1.3"/><rect x="0.3" y="4.8" width="2.2" height="1.3" opacity="0.6"/><rect x="3.8" y="4.8" width="2.2" height="1.3" opacity="0.6"/><rect x="0.3" y="9.3" width="2.2" height="1.3"/><rect x="3.8" y="9.3" width="2.2" height="1.3"/></g></svg><span class="ai" style=""><svg width="12" height="12" viewBox="0 0 12 12" fill="none" stroke="currentColor" stroke-width="1"><path d="M1 1.5 V5.5 L6.5 11 L11 6.5 L5.5 1 H1.5Z"/><circle cx="3.6" cy="3.6" r="0.6" fill="currentColor"/></svg></span><span class="at">Risk Treatment Option</span><div class="tog"></div></div>
<div class="attr" style="top:470.98px;"><svg class="drag" width="7" height="11" viewBox="0 0 7 11"><g fill="#7c7ca6"><rect x="0.3" y="0.3" width="2.2" height="1.3"/><rect x="3.8" y="0.3" width="2.2" height="1.3"/><rect x="0.3" y="4.8" width="2.2" height="1.3" opacity="0.6"/><rect x="3.8" y="4.8" width="2.2" height="1.3" opacity="0.6"/><rect x="0.3" y="9.3" width="2.2" height="1.3"/><rect x="3.8" y="9.3" width="2.2" height="1.3"/></g></svg><span class="ai" style=""><svg width="11" height="11" viewBox="0 0 12 12" fill="none" stroke="currentColor" stroke-width="1"><path d="M2.2 8.5 L7.3 3.2 Q8 2.5 8.7 3.2 Q9.4 3.9 8.7 4.6 L3.6 9.8 L1.9 10Z"/><path d="M1 11.5 H11 M8 9.2 H11"/></svg></span><span class="at">Proposed Risk Treatment</span><div class="tog"></div></div>
<div class="attr" style="top:507.70px;"><svg class="drag" width="7" height="11" viewBox="0 0 7 11"><g fill="#7c7ca6"><rect x="0.3" y="0.3" width="2.2" height="1.3"/><rect x="3.8" y="0.3" width="2.2" height="1.3"/><rect x="0.3" y="4.8" width="2.2" height="1.3" opacity="0.6"/><rect x="3.8" y="4.8" width="2.2" height="1.3" opacity="0.6"/><rect x="0.3" y="9.3" width="2.2" height="1.3"/><rect x="3.8" y="9.3" width="2.2" height="1.3"/></g></svg><span class="ai" style=""><svg width="12" height="12" viewBox="0 0 12 12" fill="none" stroke="currentColor" stroke-width="1"><path d="M1 1.5 V5.5 L6.5 11 L11 6.5 L5.5 1 H1.5Z"/><circle cx="3.6" cy="3.6" r="0.6" fill="currentColor"/></svg></span><span class="at">Control Types</span><div class="tog"></div></div>
<div class="attr" style="top:544.42px;"><svg class="drag" width="7" height="11" viewBox="0 0 7 11"><g fill="#7c7ca6"><rect x="0.3" y="0.3" width="2.2" height="1.3"/><rect x="3.8" y="0.3" width="2.2" height="1.3"/><rect x="0.3" y="4.8" width="2.2" height="1.3" opacity="0.6"/><rect x="3.8" y="4.8" width="2.2" height="1.3" opacity="0.6"/><rect x="0.3" y="9.3" width="2.2" height="1.3"/><rect x="3.8" y="9.3" width="2.2" height="1.3"/></g></svg><span class="ai" style=""><svg width="12" height="12" viewBox="0 0 12 12" fill="none" stroke="currentColor" stroke-width="1"><path d="M1 1.5 V5.5 L6.5 11 L11 6.5 L5.5 1 H1.5Z"/><circle cx="3.6" cy="3.6" r="0.6" fill="currentColor"/></svg></span><span class="at">Control Reference (Annex A)</span><div class="tog"></div></div>
<div class="attr" style="top:581.14px;"><svg class="drag" width="7" height="11" viewBox="0 0 7 11"><g fill="#7c7ca6"><rect x="0.3" y="0.3" width="2.2" height="1.3"/><rect x="3.8" y="0.3" width="2.2" height="1.3"/><rect x="0.3" y="4.8" width="2.2" height="1.3" opacity="0.6"/><rect x="3.8" y="4.8" width="2.2" height="1.3" opacity="0.6"/><rect x="0.3" y="9.3" width="2.2" height="1.3"/><rect x="3.8" y="9.3" width="2.2" height="1.3"/></g></svg><span class="ai" style=""><svg width="12" height="12" viewBox="0 0 12 12" fill="none" stroke="currentColor" stroke-width="1"><circle cx="5" cy="3.5" r="2.3"/><path d="M1 11.2 Q1 7 5 7 Q9 7 9 11.2"/><path d="M7.8 1.3 Q9.6 1.6 9.5 3.5 Q9.4 5.3 7.8 5.6 M9.6 7.2 Q11.2 8 11.2 11"/></svg></span><span class="at">Treatment Action Owner</span><div class="tog"></div><svg class="keb" viewBox="0 0 3 14"><circle cx="1.5" cy="2" r="1.1" fill="#555"/><circle cx="1.5" cy="6.5" r="1.1" fill="#555"/><circle cx="1.5" cy="11" r="1.1" fill="#555"/></svg></div>
<div class="attr" style="top:617.86px;"><svg class="drag" width="7" height="11" viewBox="0 0 7 11"><g fill="#7c7ca6"><rect x="0.3" y="0.3" width="2.2" height="1.3"/><rect x="3.8" y="0.3" width="2.2" height="1.3"/><rect x="0.3" y="4.8" width="2.2" height="1.3" opacity="0.6"/><rect x="3.8" y="4.8" width="2.2" height="1.3" opacity="0.6"/><rect x="0.3" y="9.3" width="2.2" height="1.3"/><rect x="3.8" y="9.3" width="2.2" height="1.3"/></g></svg><span class="ai" style=""><svg width="11" height="11" viewBox="0 0 12 12" fill="none" stroke="currentColor" stroke-width="1"><path d="M2.2 8.5 L7.3 3.2 Q8 2.5 8.7 3.2 Q9.4 3.9 8.7 4.6 L3.6 9.8 L1.9 10Z"/><path d="M1 11.5 H11 M8 9.2 H11"/></svg></span><span class="at">Required Resources</span><div class="tog"></div></div>
<div class="attr" style="top:654.58px;"><svg class="drag" width="7" height="11" viewBox="0 0 7 11"><g fill="#7c7ca6"><rect x="0.3" y="0.3" width="2.2" height="1.3"/><rect x="3.8" y="0.3" width="2.2" height="1.3"/><rect x="0.3" y="4.8" width="2.2" height="1.3" opacity="0.6"/><rect x="3.8" y="4.8" width="2.2" height="1.3" opacity="0.6"/><rect x="0.3" y="9.3" width="2.2" height="1.3"/><rect x="3.8" y="9.3" width="2.2" height="1.3"/></g></svg><span class="ai" style=""><svg width="12" height="12" viewBox="0 0 12 12" fill="none" stroke="currentColor" stroke-width="1"><rect x="1.5" y="1.5" width="9" height="9" rx="1.2"/><path d="M1.5 4 H10.5" stroke-width="1.6"/><path d="M4 6 V9 M6 6 V9 M8 6 V9" stroke-width="0.6"/></svg></span><span class="at">Due Date</span><div class="tog"></div></div>
<div class="attr" style="top:691.30px;"><svg class="drag" width="7" height="11" viewBox="0 0 7 11"><g fill="#7c7ca6"><rect x="0.3" y="0.3" width="2.2" height="1.3"/><rect x="3.8" y="0.3" width="2.2" height="1.3"/><rect x="0.3" y="4.8" width="2.2" height="1.3" opacity="0.6"/><rect x="3.8" y="4.8" width="2.2" height="1.3" opacity="0.6"/><rect x="0.3" y="9.3" width="2.2" height="1.3"/><rect x="3.8" y="9.3" width="2.2" height="1.3"/></g></svg><span class="ai" style=""><svg width="12" height="12" viewBox="0 0 12 12" fill="none" stroke="currentColor" stroke-width="1"><path d="M1 1.5 V5.5 L6.5 11 L11 6.5 L5.5 1 H1.5Z"/><circle cx="3.6" cy="3.6" r="0.6" fill="currentColor"/></svg></span><span class="at">Implementation Progress</span><div class="tog"></div></div>
<div class="attr" style="top:728.02px;"><svg class="drag" width="7" height="11" viewBox="0 0 7 11"><g fill="#7c7ca6"><rect x="0.3" y="0.3" width="2.2" height="1.3"/><rect x="3.8" y="0.3" width="2.2" height="1.3"/><rect x="0.3" y="4.8" width="2.2" height="1.3" opacity="0.6"/><rect x="3.8" y="4.8" width="2.2" height="1.3" opacity="0.6"/><rect x="0.3" y="9.3" width="2.2" height="1.3"/><rect x="3.8" y="9.3" width="2.2" height="1.3"/></g></svg><span class="ai" style=""><svg width="12" height="12" viewBox="0 0 12 12" fill="none" stroke="currentColor" stroke-width="1"><path d="M6 1 L7.5 4.3 L11 4.6 L8.4 6.9 L9.2 10.6 L6 8.8 L2.8 10.6 L3.6 6.9 L1 4.6 L4.5 4.3Z" stroke-linejoin="round"/></svg></span><span class="at">Residual Consequence</span><div class="tog"></div></div>
<div class="attr" style="top:764.74px;"><svg class="drag" width="7" height="11" viewBox="0 0 7 11"><g fill="#7c7ca6"><rect x="0.3" y="0.3" width="2.2" height="1.3"/><rect x="3.8" y="0.3" width="2.2" height="1.3"/><rect x="0.3" y="4.8" width="2.2" height="1.3" opacity="0.6"/><rect x="3.8" y="4.8" width="2.2" height="1.3" opacity="0.6"/><rect x="0.3" y="9.3" width="2.2" height="1.3"/><rect x="3.8" y="9.3" width="2.2" height="1.3"/></g></svg><span class="ai" style=""><svg width="12" height="12" viewBox="0 0 12 12" fill="none" stroke="currentColor" stroke-width="1"><path d="M6 1 L7.5 4.3 L11 4.6 L8.4 6.9 L9.2 10.6 L6 8.8 L2.8 10.6 L3.6 6.9 L1 4.6 L4.5 4.3Z" stroke-linejoin="round"/></svg></span><span class="at">Residual Likelihood</span><div class="tog"></div></div>
<div class="attr" style="top:801.46px;"><svg class="drag" width="7" height="11" viewBox="0 0 7 11"><g fill="#7c7ca6"><rect x="0.3" y="0.3" width="2.2" height="1.3"/><rect x="3.8" y="0.3" width="2.2" height="1.3"/><rect x="0.3" y="4.8" width="2.2" height="1.3" opacity="0.6"/><rect x="3.8" y="4.8" width="2.2" height="1.3" opacity="0.6"/><rect x="0.3" y="9.3" width="2.2" height="1.3"/><rect x="3.8" y="9.3" width="2.2" height="1.3"/></g></svg><span class="ai" style=""><svg width="13" height="12" viewBox="0 0 13 12" fill="none" stroke="currentColor" stroke-width="1"><path d="M6.5 1.2 Q5 0.8 4.6 2.6 L3.2 9.5 Q2.8 11.2 1.2 10.8 M2.6 4.5 H6.4"/><path d="M7.6 6.5 L11.6 10.8 M11.6 6.5 L7.6 10.8" stroke-width="0.9"/></svg></span><span class="at">Residual Risk Level</span><div class="tog"></div></div>
<div class="attr" style="top:838.18px;"><svg class="drag" width="7" height="11" viewBox="0 0 7 11"><g fill="#7c7ca6"><rect x="0.3" y="0.3" width="2.2" height="1.3"/><rect x="3.8" y="0.3" width="2.2" height="1.3"/><rect x="0.3" y="4.8" width="2.2" height="1.3" opacity="0.6"/><rect x="3.8" y="4.8" width="2.2" height="1.3" opacity="0.6"/><rect x="0.3" y="9.3" width="2.2" height="1.3"/><rect x="3.8" y="9.3" width="2.2" height="1.3"/></g></svg><span class="ai" style=""><svg width="12" height="12" viewBox="0 0 12 12" fill="none" stroke="currentColor" stroke-width="1"><path d="M1 1.5 V5.5 L6.5 11 L11 6.5 L5.5 1 H1.5Z"/><circle cx="3.6" cy="3.6" r="0.6" fill="currentColor"/></svg></span><span class="at">Risk Status</span><div class="tog"></div></div>
<div class="attr" style="top:874.90px;color:#c8c8cf;"><svg class="drag" width="7" height="11" viewBox="0 0 7 11"><g fill="#7c7ca6"><rect x="0.3" y="0.3" width="2.2" height="1.3"/><rect x="3.8" y="0.3" width="2.2" height="1.3"/><rect x="0.3" y="4.8" width="2.2" height="1.3" opacity="0.6"/><rect x="3.8" y="4.8" width="2.2" height="1.3" opacity="0.6"/><rect x="0.3" y="9.3" width="2.2" height="1.3"/><rect x="3.8" y="9.3" width="2.2" height="1.3"/></g></svg><span class="ai" style="color:#d0d0d5"><svg width="12" height="12" viewBox="0 0 12 12" fill="none" stroke="currentColor" stroke-width="1"><rect x="1.5" y="1.5" width="9" height="9" rx="1.2"/><path d="M1.5 4 H10.5" stroke-width="1.6"/><path d="M4 6 V9 M6 6 V9 M8 6 V9" stroke-width="0.6"/></svg></span><span class="at">Last Update</span><div class="tog off"></div></div>
</div>
</body></html>
